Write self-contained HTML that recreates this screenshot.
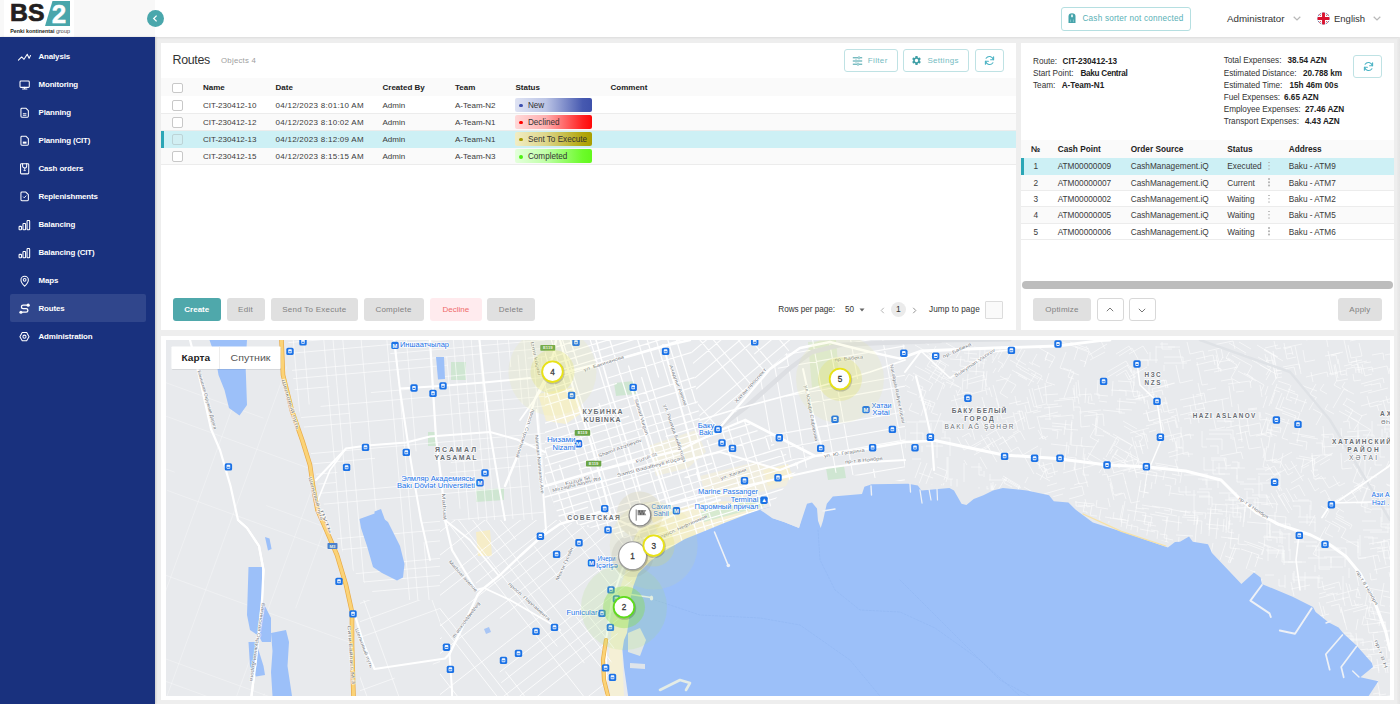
<!DOCTYPE html>
<html lang="en">
<head>
<meta charset="utf-8">
<title>Routes</title>
<style>
*{box-sizing:border-box;margin:0;padding:0}
html,body{width:1400px;height:704px;overflow:hidden;background:#eeeeee;font-family:"Liberation Sans",sans-serif;color:#333}
.abs{position:absolute}
#header{position:absolute;left:0;top:0;width:1400px;height:37px;background:#fff;box-shadow:0 1px 2px rgba(0,0,0,.08)}
#logoarea{position:absolute;left:0;top:0;width:155px;height:37px;background:#f8f8f8}
#logobox{position:absolute;left:4px;top:0;width:70px;height:37px;background:#fff}
#sidebar{position:absolute;left:0;top:37px;width:155px;height:667px;background:#19317e;box-shadow:1px 0 2px rgba(0,0,0,.15)}
.nav{position:absolute;left:0;width:155px;height:28px;color:#fff;font-weight:bold;font-size:7.9px;letter-spacing:-.12px;line-height:30px}
.nav span{position:absolute;left:38.5px;top:0;white-space:nowrap}
.nav svg{position:absolute;left:16.6px;top:8.2px;width:14px;height:13px;overflow:visible}
#navsel{position:absolute;left:9.5px;top:256.7px;width:136.3px;height:28px;background:#30468c;border-radius:2px}
#collapse{position:absolute;left:146.5px;top:10px;width:17px;height:17px;border-radius:50%;background:#4aa7ac}
.panel{position:absolute;background:#fff}
.t8{font-size:8.2px;white-space:nowrap;position:absolute;line-height:10px}
.b{font-weight:bold}
.row{position:absolute;left:0;width:855px;height:17.05px;border-bottom:1px solid #ececec}
.cb{position:absolute;left:11.2px;width:10.8px;height:10.8px;border:1px solid #c8c8c8;border-radius:2px;background:#fff}
.cell{position:absolute;font-size:8px;line-height:17.6px;white-space:nowrap;top:0;color:#3a3a3a}
.badge{position:absolute;left:354.2px;top:1.4px;width:77px;height:14.1px;border-radius:2px;font-size:8.15px;line-height:14.3px;color:#333;white-space:nowrap}
.badge i{position:absolute;left:4.3px;top:5.5px;width:3.8px;height:3.8px;border-radius:50%}
.badge span{position:absolute;left:12.8px;top:.8px}
.btn{position:absolute;height:23px;border-radius:3px;font-size:8px;line-height:23px;text-align:center;white-space:nowrap}
.gbtn{background:#e0e0e0;color:#828282;letter-spacing:.25px}
.obtn{border:1px solid #bfe2e4;background:#fff;color:#74bbc1;text-align:left}
.drow{position:absolute;left:0;width:373px;height:16.3px;border-bottom:1px solid #ececec}
.dcell{position:absolute;font-size:8.25px;line-height:17px;white-space:nowrap;top:0;color:#3a3a3a}
.dots{position:absolute;left:247px;top:3.5px;width:2px;height:9px}
.dots:before{content:"";position:absolute;left:0;top:0;width:1.5px;height:1.5px;border-radius:50%;background:#b5b5b5;box-shadow:0 3.3px 0 #b5b5b5,0 6.6px 0 #b5b5b5}
</style>
</head>
<body>
<!-- HEADER -->
<div id="header">
  <div id="logoarea"><div id="logobox"></div>
    <svg class="abs" style="left:0;top:0" width="80" height="37" viewBox="0 0 80 37">
      <polygon points="52.5,1 70,1 70,26 45,26" fill="#49a6ab"/>
      <text x="10.1" y="20.9" font-family="Liberation Sans" font-weight="bold" font-size="24" fill="#231f20" stroke="#231f20" stroke-width=".7" textLength="34.4" lengthAdjust="spacingAndGlyphs">BS</text>
      <text x="51.8" y="23.2" font-family="Liberation Sans" font-weight="bold" font-size="25.5" fill="#fff" stroke="#fff" stroke-width=".4" textLength="14.5" lengthAdjust="spacingAndGlyphs">2</text>
      <text x="10.3" y="32.8" font-family="Liberation Sans" font-weight="bold" font-size="5.8" fill="#231f20" textLength="44.2" lengthAdjust="spacingAndGlyphs">Penki kontinentai</text>
      <text x="56" y="32.8" font-family="Liberation Sans" font-size="5.8" fill="#444" textLength="14" lengthAdjust="spacingAndGlyphs">group</text>
    </svg>
  </div>
  <!-- cash sorter -->
  <div class="abs" style="left:1061px;top:7px;width:130px;height:23.5px;border:1px solid #b5dfe1;border-radius:3px"></div>
  <svg class="abs" style="left:1067.5px;top:13px" width="8" height="11" viewBox="0 0 8 11"><path d="M.5 3.600a3.500 3.300 0 0 1 7 0V10H.5z" fill="#45a3aa"/><rect x="3" y="1.600" width="2" height="2.600" fill="#cfeaec"/><path d="M2.600 6.500v2.600M5.400 6.500v2.600" stroke="#8fcdd1" stroke-width=".8"/></svg>
  <div class="t8" style="left:1082.5px;top:13.5px;color:#58b0b6;letter-spacing:.2px">Cash sorter not connected</div>
  <div class="abs" style="left:1227px;top:12px;font-size:9.75px;line-height:13px;color:#333;white-space:nowrap">Administrator</div>
  <svg class="abs" style="left:1293px;top:16px" width="8" height="5" viewBox="0 0 8 5"><path d="M.7.8 4 4 7.3.8" fill="none" stroke="#b8b8b8" stroke-width="1.25"/></svg>
  <svg class="abs" style="left:1316.5px;top:12px" width="13" height="13" viewBox="0 0 13 13">
    <defs><clipPath id="fc"><circle cx="6.5" cy="6.5" r="6"/></clipPath></defs>
    <g clip-path="url(#fc)"><rect width="13" height="13" fill="#25347a"/><path d="M0 0 13 13M13 0 0 13" stroke="#fff" stroke-width="2.2"/><path d="M0 0 13 13M13 0 0 13" stroke="#d8232a" stroke-width=".7"/><path d="M6.5 0v13M0 6.5h13" stroke="#fff" stroke-width="4.8"/><path d="M6.5 0v13M0 6.5h13" stroke="#d9112e" stroke-width="2.9"/></g>
  </svg>
  <div class="abs" style="left:1334px;top:12px;font-size:9.5px;line-height:13px;color:#333;white-space:nowrap">English</div>
  <svg class="abs" style="left:1373px;top:16px" width="8" height="5" viewBox="0 0 8 5"><path d="M.7.8 4 4 7.3.8" fill="none" stroke="#b8b8b8" stroke-width="1.25"/></svg>
</div>

<!-- SIDEBAR -->
<div id="sidebar">
  <div id="navsel"></div>
  <div class="nav" style="top:5px"><svg viewBox="0 0 15 14"><path d="M1.5 11 5 7.5 7.5 10 11 4.5 13 9 14.5 6" fill="none" stroke="#fff" stroke-width="1.12" stroke-linejoin="round" stroke-linecap="round"/></svg><span>Analysis</span></div>
  <div class="nav" style="top:33px"><svg viewBox="0 0 15 14"><rect x="3.2" y="3.3" width="10" height="6.8" rx="1" fill="none" stroke="#fff" stroke-width="1.12" stroke-linejoin="round" stroke-linecap="round"/><path d="M6 11.9h4.6M8.2 10.1v1.8" fill="none" stroke="#fff" stroke-width="1.12" stroke-linejoin="round" stroke-linecap="round"/></svg><span>Monitoring</span></div>
  <div class="nav" style="top:61px"><svg viewBox="0 0 15 14"><path d="M4.2 3.4a1 1 0 0 1 1-1h4.3l2.7 2.7v6a1 1 0 0 1-1 1H5.2a1 1 0 0 1-1-1z" fill="none" stroke="#fff" stroke-width="1.12" stroke-linejoin="round" stroke-linecap="round"/><path d="M6.3 8.3h3.8M6.3 10h3.8" fill="none" stroke="#fff" stroke-width="1"/></svg><span>Planning</span></div>
  <div class="nav" style="top:89px"><svg viewBox="0 0 15 14"><path d="M4.2 3.4a1 1 0 0 1 1-1h4.3l2.7 2.7v6a1 1 0 0 1-1 1H5.2a1 1 0 0 1-1-1z" fill="none" stroke="#fff" stroke-width="1.12" stroke-linejoin="round" stroke-linecap="round"/><rect x="6.2" y="8.2" width="4" height="2.2" fill="#fff"/></svg><span>Planning (CIT)</span></div>
  <div class="nav" style="top:117px"><svg viewBox="0 0 15 14"><rect x="3.8" y="1.8" width="8.8" height="11" rx="1" fill="none" stroke="#fff" stroke-width="1.12" stroke-linejoin="round" stroke-linecap="round"/><path d="M6 1.8v2.5a2.2 2.2 0 0 0 4.4 0V1.8" fill="none" stroke="#fff" stroke-width="1.12" stroke-linejoin="round" stroke-linecap="round"/><path d="M8.2 6.2v3.4M6.8 8.4l1.4 1.4 1.4-1.4" fill="none" stroke="#fff" stroke-width=".9"/></svg><span>Cash orders</span></div>
  <div class="nav" style="top:145px"><svg viewBox="0 0 15 14"><path d="M4.2 3.2a1 1 0 0 1 1-1h4.3l2.7 2.7v5.6a1 1 0 0 1-1 1H5.2a1 1 0 0 1-1-1z" fill="none" stroke="#fff" stroke-width="1.12" stroke-linejoin="round" stroke-linecap="round"/><path d="M6.6 7.2l1.2 1.2 2.2-2.4" fill="none" stroke="#fff" stroke-width="1"/></svg><span>Replenishments</span></div>
  <div class="nav" style="top:173px"><svg viewBox="0 0 15 14"><rect x="2.2" y="9" width="2.6" height="3.6" rx=".6" fill="none" stroke="#fff" stroke-width="1.12" stroke-linejoin="round" stroke-linecap="round"/><rect x="6.4" y="6" width="2.8" height="6.6" rx=".6" fill="none" stroke="#fff" stroke-width="1.12" stroke-linejoin="round" stroke-linecap="round"/><rect x="10.8" y="2.8" width="2.8" height="9.8" rx=".6" fill="none" stroke="#fff" stroke-width="1.12" stroke-linejoin="round" stroke-linecap="round"/></svg><span>Balancing</span></div>
  <div class="nav" style="top:201px"><svg viewBox="0 0 15 14"><rect x="2.2" y="9" width="2.6" height="3.6" rx=".6" fill="none" stroke="#fff" stroke-width="1.12" stroke-linejoin="round" stroke-linecap="round"/><rect x="6.4" y="6" width="2.8" height="6.6" rx=".6" fill="none" stroke="#fff" stroke-width="1.12" stroke-linejoin="round" stroke-linecap="round"/><rect x="10.8" y="2.8" width="2.8" height="9.8" rx=".6" fill="none" stroke="#fff" stroke-width="1.12" stroke-linejoin="round" stroke-linecap="round"/></svg><span>Balancing (CIT)</span></div>
  <div class="nav" style="top:229px"><svg viewBox="0 0 15 14"><path d="M8.2 13.2C5.6 10.6 4.2 8.6 4.2 6.4a4 4 0 0 1 8 0c0 2.2-1.400 4.200-4 6.800z" fill="none" stroke="#fff" stroke-width="1.12" stroke-linejoin="round" stroke-linecap="round"/><circle cx="8.200" cy="6.300" r="1.500" fill="none" stroke="#fff" stroke-width="1.12" stroke-linejoin="round" stroke-linecap="round"/></svg><span>Maps</span></div>
  <div class="nav" style="top:257px"><svg viewBox="0 0 15 14"><path d="M10.400 3.400H6.600a1.900 1.900 0 0 0 0 3.800h3.200a1.900 1.900 0 0 1 0 3.800H6" fill="none" stroke="#fff" stroke-width="1.400" stroke-linecap="round"/><circle cx="12" cy="3.400" r="1.700" fill="#fff"/><circle cx="4.200" cy="11" r="1.700" fill="#fff"/></svg><span>Routes</span></div>
  <div class="nav" style="top:285px"><svg viewBox="0 0 15 14"><path d="M5.600 2.800h4.800l2.500 4.400-2.500 4.400H5.600L3.100 7.200z" fill="none" stroke="#fff" stroke-width="1.12" stroke-linejoin="round" stroke-linecap="round"/><circle cx="8" cy="7.200" r="1.700" fill="none" stroke="#fff" stroke-width="1.12" stroke-linejoin="round" stroke-linecap="round"/></svg><span>Administration</span></div>
</div>
<div id="collapse"><svg class="abs" style="left:0;top:0" width="17" height="17" viewBox="0 0 17 17"><path d="M9.6 5.6 6.7 8.5l2.9 2.9" fill="none" stroke="#fff" stroke-width="1.3"/></svg></div>

<div id="rstrip" class="abs" style="left:1396.5px;top:38px;width:3.5px;height:666px;background:linear-gradient(90deg,#ebebeb,#e4e4e4)"></div>
<!-- ROUTES PANEL -->
<div class="panel" id="routes" style="left:161px;top:43px;width:855px;height:287px">
  <div class="abs" style="left:11.5px;top:9px;font-size:12.4px;letter-spacing:-.3px;line-height:16px;color:#333;white-space:nowrap">Routes</div>
  <div class="t8" style="left:60px;top:12.5px;color:#9e9e9e;font-size:7.8px;letter-spacing:.25px">Objects 4</div>
  <!-- header row -->
  <div class="abs" style="left:0;top:35px;width:855px;height:18px;background:#fafafa"></div>
  <div class="cb" style="top:39.5px"></div>
  <div class="cell b" style="left:42px;top:35.5px;color:#222">Name</div>
  <div class="cell b" style="left:114.5px;top:35.5px;color:#222">Date</div>
  <div class="cell b" style="left:221.5px;top:35.5px;color:#222">Created By</div>
  <div class="cell b" style="left:294px;top:35.5px;color:#222">Team</div>
  <div class="cell b" style="left:354.5px;top:35.5px;color:#222">Status</div>
  <div class="cell b" style="left:449.5px;top:35.5px;color:#222">Comment</div>
  <!-- rows -->
  <div class="row" style="top:53.7px"><div class="cb" style="top:3.5px"></div><div class="cell" style="left:42px">CIT-230412-10</div><div class="cell" style="left:114.5px;letter-spacing:.27px">04/12/2023 8:01:10 AM</div><div class="cell" style="left:221.5px">Admin</div><div class="cell" style="left:294px">A-Team-N2</div><div class="badge" style="background:linear-gradient(90deg,#dfe3f3 0%,#bcc5e6 40%,#4659b0 88%,#3e51ab 100%)"><i style="background:#3c4fae"></i><span>New</span></div></div>
  <div class="row" style="top:70.75px;background:#fafafa"><div class="cb" style="top:3.5px"></div><div class="cell" style="left:42px">CIT-230412-12</div><div class="cell" style="left:114.5px;letter-spacing:.27px">04/12/2023 8:10:02 AM</div><div class="cell" style="left:221.5px">Admin</div><div class="cell" style="left:294px">A-Team-N1</div><div class="badge" style="background:linear-gradient(90deg,#ffd9d9 0%,#ffb0b0 40%,#ff2020 88%,#ff0808 100%)"><i style="background:#f00"></i><span>Declined</span></div></div>
  <div class="row" style="top:87.8px;background:#cdf0f5;border-bottom-color:#cdf0f5"><div class="abs" style="left:0;top:0;width:2.5px;height:17.2px;background:#2aa6b6"></div><div class="cb" style="top:3.5px;background:#d2eff3;border-color:#bcd3d6"></div><div class="cell" style="left:42px">CIT-230412-13</div><div class="cell" style="left:114.5px;letter-spacing:.27px">04/12/2023 8:12:09 AM</div><div class="cell" style="left:221.5px">Admin</div><div class="cell" style="left:294px">A-Team-N1</div><div class="badge" style="background:linear-gradient(90deg,#f1edc4 0%,#ddd68a 40%,#b2a60e 88%,#aa9e00 100%)"><i style="background:#a89c00"></i><span>Sent To Execute</span></div></div>
  <div class="row" style="top:104.85px;background:#fafafa"><div class="cb" style="top:3.5px"></div><div class="cell" style="left:42px">CIT-230412-15</div><div class="cell" style="left:114.5px;letter-spacing:.27px">04/12/2023 8:15:15 AM</div><div class="cell" style="left:221.5px">Admin</div><div class="cell" style="left:294px">A-Team-N3</div><div class="badge" style="background:linear-gradient(90deg,#e4ffdc 0%,#c0ffa8 40%,#6cfb2a 88%,#62f81c 100%)"><i style="background:#4cf010"></i><span>Completed</span></div></div>
  <!-- top buttons -->
  <div class="btn obtn" style="left:682.5px;top:6px;width:54.3px"><svg class="abs" style="left:7.7px;top:5.8px" width="11" height="10" viewBox="0 0 11 10"><path d="M.8 1.8h5.200M8 1.800h2.200M.8 5h2.200M5 5h5.200M.8 8.200h4.200M7 8.200h3.200" stroke="#3f9fa6" stroke-width="1" fill="none"/><path d="M7 .3v3M4 3.500v3M6 6.700v3" stroke="#3f9fa6" stroke-width="1" fill="none"/></svg><span class="abs" style="left:23.3px;top:-1.3px;letter-spacing:.35px">Filter</span></div>
  <div class="btn obtn" style="left:742px;top:6px;width:66px"><svg class="abs" style="left:7.4px;top:4.8px" width="11" height="11" viewBox="0 0 24 24"><path fill="#3f9fa6" d="M19.140 12.940c.040-.300.060-.610.060-.940 0-.320-.020-.640-.070-.940l2.030-1.580a.490.490 0 0 0 .120-.610l-1.920-3.320a.488.488 0 0 0-.590-.220l-2.390.960c-.500-.380-1.030-.700-1.620-.940l-.360-2.540a.484.484 0 0 0-.480-.410h-3.840c-.240 0-.430.170-.470.410l-.360 2.540c-.590.240-1.130.570-1.620.940l-2.390-.960c-.220-.080-.470 0-.590.220L2.740 8.870c-.120.210-.080.470.120.610l2.030 1.580c-.050.300-.090.630-.090.940s.020.640.070.940l-2.030 1.580a.490.490 0 0 0-.120.610l1.920 3.320c.120.220.370.290.590.220l2.390-.960c.500.380 1.030.700 1.620.940l.360 2.540c.050.240.240.410.480.410h3.840c.240 0 .440-.170.470-.410l.360-2.540c.590-.240 1.130-.560 1.620-.940l2.390.960c.220.080.470 0 .590-.220l1.920-3.320c.120-.220.070-.470-.120-.610l-2.010-1.580zM12 15.600c-1.980 0-3.600-1.620-3.600-3.600s1.620-3.600 3.600-3.600 3.600 1.620 3.600 3.600-1.620 3.600-3.600 3.600z"/></svg><span class="abs" style="left:23.4px;top:-1.3px;letter-spacing:.3px">Settings</span></div>
  <div class="btn obtn" style="left:813.8px;top:6px;width:29.3px"><svg class="abs" style="left:8.6px;top:5.4px" width="11" height="11" viewBox="0 0 11 11"><path d="M9.300 4.600A4 4 0 0 0 2.100 3.200M1.700 6.400a4 4 0 0 0 7.200 1.400" fill="none" stroke="#4bb3c4" stroke-width="1.100" stroke-linecap="round"/><path d="M9.600 1.700v3h-3M1.400 9.300v-3h3" fill="none" stroke="#4bb3c4" stroke-width="1.100" stroke-linecap="round" stroke-linejoin="round"/></svg></div>
  <!-- bottom buttons -->
  <div class="btn b" style="left:11.5px;top:255px;width:48.5px;background:#4fa8ab;color:#fff">Create</div>
  <div class="btn gbtn" style="left:65.5px;top:255px;width:38px">Edit</div>
  <div class="btn gbtn" style="left:109.8px;top:255px;width:87px">Send To Execute</div>
  <div class="btn gbtn" style="left:202.5px;top:255px;width:60px">Complete</div>
  <div class="btn" style="left:269px;top:255px;width:51.5px;background:#ffebee;color:#ef6b6b">Decline</div>
  <div class="btn gbtn" style="left:326px;top:255px;width:48px">Delete</div>
  <!-- pagination -->
  <div class="t8" style="left:617.3px;top:262px;color:#333;letter-spacing:-.05px">Rows per page:</div>
  <div class="t8" style="left:684px;top:262px;color:#333">50</div>
  <svg class="abs" style="left:698px;top:265px" width="6" height="4" viewBox="0 0 6 4"><path d="M.5.5h5L3 3.5z" fill="#666"/></svg>
  <svg class="abs" style="left:719px;top:263.5px" width="5" height="7" viewBox="0 0 5 7"><path d="M3.8.8 1.2 3.5l2.6 2.7" fill="none" stroke="#aaa" stroke-width=".9"/></svg>
  <div class="abs" style="left:729.8px;top:259px;width:15px;height:15px;border-radius:50%;background:#ebebeb;font-size:8.5px;line-height:15.5px;text-align:center;color:#333">1</div>
  <svg class="abs" style="left:751px;top:263.5px" width="5" height="7" viewBox="0 0 5 7"><path d="M1.2.8 3.8 3.5 1.2 6.2" fill="none" stroke="#888" stroke-width=".9"/></svg>
  <div class="t8" style="left:768px;top:262px;color:#333;letter-spacing:.1px">Jump to page</div>
  <div class="abs" style="left:824px;top:258px;width:18px;height:17.5px;border:1px solid #dcdcdc;background:#fafafa;border-radius:1px"></div>
</div>

<!-- DETAIL PANEL -->
<div class="panel" id="detail" style="left:1021px;top:43px;width:373px;height:287px">
  <!-- info left -->
  <div class="t8" style="left:12px;top:13.5px">Route:</div><div class="t8 b" style="left:41.5px;top:13.5px;color:#222">CIT-230412-13</div>
  <div class="t8" style="left:12px;top:25.8px">Start Point:</div><div class="t8 b" style="left:59.5px;top:25.8px;color:#222;letter-spacing:-.3px">Baku Central</div>
  <div class="t8" style="left:12px;top:37.5px">Team:</div><div class="t8 b" style="left:40.7px;top:37.5px;color:#222">A-Team-N1</div>
  <!-- info right -->
  <div class="t8" style="left:202.7px;top:13px">Total Expenses:</div><div class="t8 b" style="left:266.5px;top:13px;color:#222">38.54 AZN</div>
  <div class="t8" style="left:202.7px;top:25.8px">Estimated Distance:</div><div class="t8 b" style="left:282px;top:25.8px;color:#222">20.788 km</div>
  <div class="t8" style="left:202.7px;top:37.5px">Estimated Time:</div><div class="t8 b" style="left:268.5px;top:37.5px;color:#222">15h 46m 00s</div>
  <div class="t8" style="left:202.7px;top:49.6px">Fuel Expenses:</div><div class="t8 b" style="left:263px;top:49.6px;color:#222">6.65 AZN</div>
  <div class="t8" style="left:202.7px;top:61.7px">Employee Expenses:</div><div class="t8 b" style="left:284px;top:61.7px;color:#222">27.46 AZN</div>
  <div class="t8" style="left:202.7px;top:74px">Transport Expenses:</div><div class="t8 b" style="left:284px;top:74px;color:#222">4.43 AZN</div>
  <div class="btn obtn" style="left:332px;top:11.8px;width:29.3px"><svg class="abs" style="left:8.6px;top:5.4px" width="11" height="11" viewBox="0 0 11 11"><path d="M9.300 4.600A4 4 0 0 0 2.100 3.200M1.700 6.400a4 4 0 0 0 7.200 1.400" fill="none" stroke="#4bb3c4" stroke-width="1.100" stroke-linecap="round"/><path d="M9.600 1.700v3h-3M1.400 9.300v-3h3" fill="none" stroke="#4bb3c4" stroke-width="1.100" stroke-linecap="round" stroke-linejoin="round"/></svg></div>
  <!-- table -->
  <div class="abs" style="left:0;top:97px;width:373px;height:18.4px;background:#fafafa"></div>
  <div class="dcell b" style="left:9.7px;top:98px;color:#222">&#8470;</div>
  <div class="dcell b" style="left:36.7px;top:98px;color:#222">Cash Point</div>
  <div class="dcell b" style="left:109.7px;top:98px;color:#222">Order Source</div>
  <div class="dcell b" style="left:206.3px;top:98px;color:#222">Status</div>
  <div class="dcell b" style="left:267.7px;top:98px;color:#222">Address</div>
  <div class="drow" style="top:115.4px;background:#cdf0f5;border-bottom-color:#cdf0f5"><div class="abs" style="left:0;top:0;width:2.5px;height:16.2px;background:#2aa6b6"></div><div class="dcell" style="left:12.5px">1</div><div class="dcell" style="left:36.7px">ATM00000009</div><div class="dcell" style="left:109.7px">CashManagement.iQ</div><div class="dcell" style="left:206.3px">Executed</div><div class="dots"></div><div class="dcell" style="left:267.7px">Baku - ATM9</div></div>
  <div class="drow" style="top:131.8px;background:#fafafa"><div class="dcell" style="left:12.5px">2</div><div class="dcell" style="left:36.7px">ATM00000007</div><div class="dcell" style="left:109.7px">CashManagement.iQ</div><div class="dcell" style="left:206.3px">Current</div><div class="dots"></div><div class="dcell" style="left:267.7px">Baku - ATM7</div></div>
  <div class="drow" style="top:148.1px"><div class="dcell" style="left:12.5px">3</div><div class="dcell" style="left:36.7px">ATM00000002</div><div class="dcell" style="left:109.7px">CashManagement.iQ</div><div class="dcell" style="left:206.3px">Waiting</div><div class="dots"></div><div class="dcell" style="left:267.7px">Baku - ATM2</div></div>
  <div class="drow" style="top:164.4px;background:#fafafa"><div class="dcell" style="left:12.5px">4</div><div class="dcell" style="left:36.7px">ATM00000005</div><div class="dcell" style="left:109.7px">CashManagement.iQ</div><div class="dcell" style="left:206.3px">Waiting</div><div class="dots"></div><div class="dcell" style="left:267.7px">Baku - ATM5</div></div>
  <div class="drow" style="top:180.7px"><div class="dcell" style="left:12.5px">5</div><div class="dcell" style="left:36.7px">ATM00000006</div><div class="dcell" style="left:109.7px">CashManagement.iQ</div><div class="dcell" style="left:206.3px">Waiting</div><div class="dots"></div><div class="dcell" style="left:267.7px">Baku - ATM6</div></div>
  <!-- scrollbar -->
  <div class="abs" style="left:1px;top:238px;width:371px;height:8px;border-radius:4px;background:#bdbdbd"></div>
  <!-- buttons -->
  <div class="btn gbtn" style="left:12px;top:255px;width:58px">Optimize</div>
  <div class="btn" style="left:75.6px;top:255px;width:27px;border:1px solid #d8d8d8;background:#fff"><svg class="abs" style="left:8.5px;top:8px" width="8" height="5" viewBox="0 0 8 5"><path d="M.8 4.2 4 1l3.2 3.2" fill="none" stroke="#777" stroke-width="1"/></svg></div>
  <div class="btn" style="left:107.8px;top:255px;width:27px;border:1px solid #d8d8d8;background:#fff"><svg class="abs" style="left:8.5px;top:8.5px" width="8" height="5" viewBox="0 0 8 5"><path d="M.8.8 4 4 7.2.8" fill="none" stroke="#777" stroke-width="1"/></svg></div>
  <div class="btn gbtn" style="left:317px;top:255px;width:44px">Apply</div>
</div>

<!-- MAP PANEL -->
<div class="panel" id="mappanel" style="left:161px;top:336px;width:1233px;height:364px">
<!--MAPSTART-->
<svg class="abs" style="left:5px;top:4px" width="1224" height="356" viewBox="166 340 1224 356" font-family="Liberation Sans">
<rect x="166" y="340" width="1224" height="356" fill="#e8eaed"/>
<polygon points="538,394 574,387 583,412 566,424 546,421" fill="#f5f0d4" />
<polygon points="648,446 696,430 706,452 688,468 656,476" fill="#f0eee0" />
<polygon points="700,476 756,462 792,472 786,486 740,497 706,497" fill="#f1eee0" />
<polygon points="650,516 700,503 745,500 760,509 722,524 685,539 650,561 638,574 630,600 627,633 622,650 624,696 610,696 609,650 616,600 626,570 644,548 660,536" fill="#f5f0d6" />
<polygon points="763,470 788,464 793,478 768,486" fill="#f5efd3" />
<polygon points="476,532 490,530 492,556 478,556" fill="#f6edc8" />
<polygon points="451,362 466,362 466,380 451,380" fill="#cfe6d2" />
<polygon points="614,383 634,381 636,394 616,396" fill="#cfe6d2" />
<polygon points="428,432 436,432 436,446 428,446" fill="#cfe6d2" />
<polygon points="476,490 504,488 504,500 476,502" fill="#cfe6d2" />
<polygon points="808,342 836,340 840,386 812,388" fill="#dde9d5" />
<polygon points="826,468 844,466 846,478 828,480" fill="#cfe6d2" />
<polygon points="700,512 760,498 764,506 704,522" fill="#d7ead0" />
<clipPath id="c1"><polygon points="545,340 690,340 700,420 716,432 745,420 800,466 770,507 650,561 620,535 560,520 545,480"/></clipPath>
<g clip-path="url(#c1)" stroke="#fff" stroke-width="1.25" fill="none" opacity="0.95">
<path d="M449.3 331.8L526.2 308.3M526.2 308.3L595.0 287.3M595.0 287.3L674.2 263.1M674.2 263.1L747.0 240.8M453.8 346.6L486.1 336.7M486.1 336.7L597.9 302.6M679.5 277.6L709.5 268.4M709.5 268.4L743.3 258.1M792.8 243.0L861.5 222.0M456.4 355.0L540.2 329.4M540.2 329.4L625.9 303.2M625.9 303.2L678.5 287.1M678.5 287.1L792.9 252.1M792.9 252.1L882.5 224.7M458.3 361.2L493.0 350.6M493.0 350.6L556.2 331.3M556.2 331.3L618.1 312.3M719.8 281.3L766.5 267.0M766.5 267.0L835.6 245.8M514.6 359.8L571.9 342.2M715.8 298.3L749.6 287.9M749.6 287.9L793.6 274.5M793.6 274.5L860.8 253.9M549.3 357.9L614.2 338.1M614.2 338.1L666.1 322.2M666.1 322.2L763.9 292.3M763.9 292.3L868.8 260.3M551.2 364.8L665.0 330.0M665.0 330.0L715.9 314.4M715.9 314.4L772.9 297.0M807.9 286.3L886.8 262.2M469.6 398.0L537.2 377.3M537.2 377.3L607.6 355.8M607.6 355.8L710.8 324.2M710.8 324.2L752.8 311.4M752.8 311.4L851.9 281.1M471.4 404.0L581.0 370.5M581.0 370.5L691.5 336.7M691.5 336.7L772.1 312.1M809.8 300.6L921.3 266.5M473.8 411.9L573.4 381.5M718.0 337.3L766.4 322.5M766.4 322.5L868.4 291.3M522.0 404.2L573.9 388.3M607.8 378.0L668.2 359.5M668.2 359.5L708.2 347.3M708.2 347.3L813.6 315.0M813.6 315.0L898.8 289.0M509.8 416.1L616.8 383.4M728.3 349.3L811.8 323.8M811.8 323.8L903.4 295.8M483.0 442.1L589.2 409.6M589.2 409.6L678.5 382.3M678.5 382.3L785.9 349.5M785.9 349.5L873.6 322.7M485.6 450.6L582.4 421.0M582.4 421.0L660.4 397.2M660.4 397.2L722.0 378.3M803.0 353.6L886.8 328.0M488.3 459.1L550.4 440.1M550.4 440.1L629.1 416.1M823.2 356.7L903.6 332.1M490.1 465.3L561.6 443.5M561.6 443.5L669.5 410.5M669.5 410.5L699.2 401.4M699.2 401.4L786.3 374.8M786.3 374.8L829.6 361.6M829.6 361.6L915.0 335.4M492.8 473.9L578.8 447.6M578.8 447.6L644.5 427.5M644.5 427.5L751.9 394.7M751.9 394.7L813.7 375.8M495.0 481.1L596.7 450.0M596.7 450.0L707.2 416.2M707.2 416.2L750.4 403.0M750.4 403.0L802.8 387.0M802.8 387.0L867.1 367.3M497.1 488.2L598.1 457.4M665.7 436.7L697.1 427.1M697.1 427.1L729.3 417.2M729.3 417.2L807.1 393.4M498.9 494.1L529.8 484.7M578.9 469.6L611.6 459.6M611.6 459.6L678.7 439.1M678.7 439.1L763.8 413.1M763.8 413.1L875.0 379.1M544.9 486.7L614.2 465.5M614.2 465.5L658.3 452.0M658.3 452.0L716.8 434.2M716.8 434.2L790.2 411.7M790.2 411.7L884.0 383.0M503.3 508.4L539.5 497.3M630.4 469.6L698.1 448.9M698.1 448.9L805.1 416.1M805.1 416.1L882.8 392.4M505.8 516.6L574.4 495.7M574.4 495.7L620.8 481.5M620.8 481.5L719.9 451.2M719.9 451.2L810.3 423.5M810.3 423.5L916.5 391.1M508.6 525.5L605.3 495.9M605.3 495.9L712.3 463.2M771.0 445.3L837.6 424.9M837.6 424.9L932.4 395.9M510.2 531.0L544.4 520.5M544.4 520.5L588.0 507.2M684.5 477.7L726.0 465.0M726.0 465.0L817.0 437.2M817.0 437.2L905.0 410.3M512.4 538.2L548.5 527.1M548.5 527.1L622.5 504.5M622.5 504.5L713.9 476.5M713.9 476.5L787.6 454.0M787.6 454.0L864.5 430.5M514.5 544.9L620.7 512.4M620.7 512.4L722.6 481.3M722.6 481.3L796.4 458.7M796.4 458.7L842.4 444.6M842.4 444.6L914.4 422.6M516.1 550.4L589.3 528.0M589.3 528.0L686.9 498.2M686.9 498.2L757.8 476.5M757.8 476.5L792.2 466.0M792.2 466.0L856.5 446.3M856.5 446.3L964.7 413.3M518.3 557.5L584.3 537.3M584.3 537.3L690.5 504.8M690.5 504.8L746.5 487.7M746.5 487.7L828.4 462.7M828.4 462.7L868.2 450.5M520.0 562.9L568.2 548.2M568.2 548.2L624.6 530.9M798.3 477.8L870.9 455.6M521.8 569.0L588.1 548.7M588.1 548.7L652.4 529.1M652.4 529.1L694.8 516.1M694.8 516.1L777.9 490.7M777.9 490.7L852.1 468.0M852.1 468.0L933.5 443.2M523.7 575.2L622.2 545.1M622.2 545.1L678.1 528.0M678.1 528.0L786.2 495.0M786.2 495.0L900.8 459.9M525.5 581.1L616.8 553.2M616.8 553.2L653.8 541.9M653.8 541.9L718.8 522.0M718.8 522.0L758.3 509.9M846.0 483.1L892.0 469.0M528.2 589.7L566.8 577.9M566.8 577.9L660.7 549.2M660.7 549.2L748.4 522.4M783.2 511.8L815.1 502.0M815.1 502.0L888.1 479.7M530.0 595.6L576.2 581.5M576.2 581.5L690.1 546.7M727.0 535.4L837.6 501.6M837.6 501.6L932.1 472.7M532.1 602.7L597.8 582.6M597.8 582.6L627.7 573.5M627.7 573.5L729.0 542.5M729.0 542.5L796.8 521.8M796.8 521.8L860.4 502.3M860.4 502.3L903.3 489.2M533.8 608.1L631.5 578.2M631.5 578.2L734.3 546.8M734.3 546.8L797.8 527.4M797.8 527.4L869.9 505.4M869.9 505.4L967.8 475.4M536.4 616.8L632.1 587.5M632.1 587.5L695.7 568.1M695.7 568.1L800.1 536.2M800.1 536.2L894.8 507.2M538.5 623.6L573.3 613.0M642.3 591.9L701.6 573.7M701.6 573.7L784.0 548.5M784.0 548.5L894.0 514.9M540.5 630.2L618.3 606.4M618.3 606.4L680.5 587.4M680.5 587.4L764.4 561.7M764.4 561.7L858.7 532.9M858.7 532.9L889.4 523.5M606.3 618.9L651.8 605.0M651.8 605.0L688.9 593.6M688.9 593.6L795.6 561.0M795.6 561.0L868.0 538.9M868.0 538.9L945.5 515.2M545.3 645.9L580.6 635.1M852.7 551.9L924.0 530.1M547.1 651.5L612.0 631.6M612.0 631.6L692.1 607.1M692.1 607.1L745.4 590.8M745.4 590.8L822.3 567.3M822.3 567.3L912.7 539.7M581.1 647.0L674.7 618.4M674.7 618.4L780.7 586.0M780.7 586.0L813.7 575.9M551.4 665.5L621.2 644.2M621.2 644.2L670.8 629.0M670.8 629.0L780.2 595.6M780.2 595.6L849.2 574.5M849.2 574.5L948.2 544.2M553.1 671.3L621.0 650.6M621.0 650.6L654.2 640.4M654.2 640.4L693.6 628.4M693.6 628.4L779.8 602.0M779.8 602.0L831.0 586.4M831.0 586.4L895.8 566.5M449.3 331.8L483.2 442.5M498.2 491.7L530.5 597.3M530.5 597.3L555.7 679.7M457.0 329.5L480.6 406.8M480.6 406.8L506.0 490.0M506.0 490.0L519.8 535.0M519.8 535.0L554.3 648.0M463.7 327.5L483.6 392.7M483.6 392.7L495.1 430.3M505.8 465.2L532.3 552.1M532.3 552.1L557.7 635.1M557.7 635.1L579.1 705.0M502.4 425.9L514.4 464.9M514.4 464.9L539.6 547.3M539.6 547.3L553.9 594.3M553.9 594.3L569.5 645.2M569.5 645.2L588.0 705.6M482.3 321.8L505.5 397.7M505.5 397.7L538.5 505.6M489.1 319.7L510.7 390.1M510.7 390.1L527.3 444.5M527.3 444.5L538.1 479.7M564.3 565.4L581.0 620.3M581.0 620.3L608.1 708.7M496.2 317.5L524.1 408.7M524.1 408.7L535.9 447.5M535.9 447.5L559.7 525.2M559.7 525.2L593.2 634.7M593.2 634.7L613.5 701.1M504.0 315.1L523.3 378.2M523.3 378.2L555.6 483.9M555.6 483.9L573.9 543.7M573.9 543.7L592.2 603.7M592.2 603.7L611.2 665.7M512.9 312.4L535.8 387.6M559.4 464.8L588.2 558.8M604.3 611.7L626.7 684.8M521.7 309.7L547.7 394.4M547.7 394.4L558.1 428.6M587.6 525.2L598.5 560.9M530.9 306.9L559.3 399.8M559.3 399.8L574.6 449.6M574.6 449.6L603.5 544.1M603.5 544.1L632.4 638.7M632.4 638.7L650.0 696.4M540.3 304.0L563.2 379.0M563.2 379.0L590.6 468.6M590.6 468.6L610.2 532.6M610.2 532.6L636.5 618.7M636.5 618.7L666.5 716.8M550.6 300.9L576.2 384.7M576.2 384.7L603.6 474.5M603.6 474.5L623.5 539.5M623.5 539.5L636.1 580.7M636.1 580.7L671.0 694.7M557.7 298.7L577.7 364.0M628.9 531.4L654.7 615.8M598.9 403.1L610.5 441.1M610.5 441.1L625.0 488.5M625.0 488.5L652.6 578.9M652.6 578.9L667.3 626.9M575.9 293.2L599.1 369.0M599.1 369.0L620.5 439.0M620.5 439.0L652.6 544.1M652.6 544.1L670.4 602.2M670.4 602.2L704.3 713.2M593.8 287.7L612.7 349.5M612.7 349.5L635.1 422.6M635.1 422.6L669.9 536.5M684.9 585.6L706.1 655.0M628.4 365.5L641.3 407.7M641.3 407.7L656.9 458.7M656.9 458.7L679.3 531.8M679.3 531.8L714.2 646.0M641.5 377.0L671.9 476.3M702.3 575.8L718.2 627.7M619.3 279.9L640.4 348.9M640.4 348.9L664.6 428.1M664.6 428.1L681.4 482.9M681.4 482.9L701.1 547.5M701.1 547.5L712.3 584.0M712.3 584.0L726.6 630.6M628.1 277.2L658.7 377.5M675.7 432.9L692.5 487.9M692.5 487.9L720.1 578.2M636.2 274.7L670.4 386.6M696.4 471.6L715.1 532.7M715.1 532.7L730.1 581.9M646.9 271.4L661.1 317.9M661.1 317.9L677.5 371.6M677.5 371.6L700.5 446.7M700.5 446.7L718.2 504.5M718.2 504.5L744.5 590.5M744.5 590.5L758.5 636.4M654.8 269.0L678.4 346.2M678.4 346.2L695.9 403.4M707.1 440.0L718.3 476.8M745.7 566.5L765.1 629.8M671.2 264.0L683.3 303.4M683.3 303.4L694.0 338.3M694.0 338.3L714.0 403.8M714.0 403.8L739.8 488.2M739.8 488.2L770.1 587.5M770.1 587.5L787.6 644.7M677.8 262.0L704.9 350.9M704.9 350.9L734.5 447.6M759.3 528.7L776.8 585.8M685.8 259.5L715.4 356.1M740.2 437.4L769.2 532.1M769.2 532.1L792.4 607.9M694.4 256.9L722.0 347.0M722.0 347.0L744.3 420.1M744.3 420.1L775.1 520.7M775.1 520.7L808.7 630.7M709.3 252.4L736.4 341.1M736.4 341.1L769.6 449.7M719.6 249.2L743.1 326.2M743.1 326.2L758.9 377.6M758.9 377.6L793.7 491.7M818.3 572.1L848.8 671.8M729.9 246.1L753.8 324.1M753.8 324.1L767.4 368.8M778.2 404.0L791.7 448.2M791.7 448.2L825.2 557.8M825.2 557.8L842.1 612.9M739.5 243.1L763.9 322.7M763.9 322.7L773.1 352.8M794.2 421.8L813.1 483.8M813.1 483.8L826.5 527.4M826.5 527.4L842.2 578.8M842.2 578.8L859.7 636.0M746.2 241.1L758.7 282.2M758.7 282.2L783.3 362.6M783.3 362.6L802.9 426.7M802.9 426.7L829.8 514.7M829.8 514.7L858.4 608.1M756.9 237.8L788.2 340.1M788.2 340.1L808.4 406.1M808.4 406.1L841.0 512.7M841.0 512.7L863.5 586.6M767.2 234.6L777.5 268.0M777.5 268.0L809.9 374.2M809.9 374.2L834.4 454.3M834.4 454.3L851.2 509.2M861.8 543.9L882.3 611.1M784.9 229.3L799.9 278.5M799.9 278.5L819.1 341.3M819.1 341.3L829.7 375.8M829.7 375.8L863.9 487.7M863.9 487.7L895.4 591.0"/>
</g>
<clipPath id="c1b"><polygon points="690,340 800,340 770,369 716,432 700,420"/></clipPath>
<g clip-path="url(#c1b)" stroke="#fff" stroke-width="1.1" fill="none" opacity="0.9">
<path d="M629.9 375.9L704.4 313.5M643.8 392.5L666.8 373.2M666.8 373.2L710.4 336.6M710.4 336.6L737.7 313.7M737.7 313.7L816.9 247.2M675.9 377.7L760.9 306.4M760.9 306.4L818.2 258.3M657.7 409.1L695.0 377.9M695.0 377.9L781.6 305.2M781.6 305.2L818.0 274.6M663.7 416.2L698.5 387.0M698.5 387.0L790.1 310.1M754.2 354.2L784.5 328.8M784.5 328.8L829.1 291.4M678.2 433.5L710.5 406.4M710.5 406.4L798.1 332.8M798.1 332.8L826.5 309.0M684.0 440.4L720.5 409.7M720.5 409.7L759.7 376.8M759.7 376.8L837.2 311.8M690.9 448.7L754.6 395.3M754.6 395.3L798.3 358.6M798.3 358.6L867.3 300.7M705.8 466.4L765.2 416.5M765.2 416.5L791.3 394.6M791.3 394.6L833.9 358.9M718.9 482.0L758.9 448.5M758.9 448.5L819.6 397.5M819.6 397.5L904.5 326.3M723.9 487.9L798.6 425.2M798.6 425.2L885.6 352.2M729.3 494.3L796.7 437.7M796.7 437.7L865.1 380.4M629.9 375.9L698.1 457.2M698.1 457.2L747.5 516.1M636.9 370.0L665.8 404.4M665.8 404.4L698.7 443.6M698.7 443.6L762.7 519.9M646.6 361.9L694.2 418.6M694.2 418.6L747.0 481.6M747.0 481.6L768.4 507.0M655.9 354.1L725.7 437.2M753.8 470.7L801.8 527.9M729.6 425.3L801.4 510.8M743.1 423.8L780.5 468.5M688.7 326.6L747.9 397.2M696.7 319.9L728.5 357.8M728.5 357.8L750.2 383.7M750.2 383.7L813.5 459.1M766.0 388.4L799.2 428.0M799.2 428.0L826.7 460.7M734.9 336.0L811.8 427.6M811.8 427.6L873.6 501.2M718.6 301.5L751.9 341.1M751.9 341.1L825.1 428.4M781.0 360.1L823.6 410.9M823.6 410.9L846.2 437.9M735.6 287.3L789.0 351.0M789.0 351.0L835.1 405.8M835.1 405.8L903.1 486.9M745.2 279.2L784.6 326.1M835.6 387.0L866.7 424.0M753.5 272.2L798.6 326.0M798.6 326.0L857.2 395.8M857.2 395.8L888.3 432.9"/>
</g>
<clipPath id="c1c"><polygon points="800,340 905,340 905,482 815,470 800,466 745,420 716,432 770,369"/></clipPath>
<g clip-path="url(#c1c)" stroke="#fff" stroke-width="1.1" fill="none" opacity="0.85">
<path d="M662.0 307.0L723.7 296.1M723.7 296.1L754.9 290.6M754.9 290.6L807.7 281.3M807.7 281.3L919.1 261.7M664.1 319.2L707.3 311.6M707.3 311.6L768.7 300.8M768.7 300.8L862.4 284.2M862.4 284.2L893.7 278.7M667.0 335.6L764.9 318.4M764.9 318.4L799.3 312.3M850.0 303.4L892.9 295.8M892.9 295.8L925.2 290.1M669.4 348.9L711.0 341.6M711.0 341.6L763.6 332.3M852.2 316.7L899.9 308.2M899.9 308.2L992.6 291.9M671.7 361.9L721.2 353.2M721.2 353.2L781.4 342.6M814.5 336.7L899.9 321.6M899.9 321.6L1001.2 303.8M673.8 374.3L784.9 354.7M784.9 354.7L875.5 338.7M875.5 338.7L989.7 318.6M676.0 386.2L713.5 379.6M777.8 368.3L841.3 357.1M841.3 357.1L914.9 344.1M914.9 344.1L958.5 336.4M681.0 414.8L718.8 408.1M785.8 396.3L866.9 382.0M866.9 382.0L945.5 368.1M810.1 402.9L883.5 389.9M883.5 389.9L954.6 377.4M687.2 450.1L766.9 436.1M766.9 436.1L855.7 420.4M855.7 420.4L926.8 407.9M926.8 407.9L1041.0 387.7M689.7 464.4L787.7 447.2M787.7 447.2L872.2 432.2M872.2 432.2L938.6 420.5M938.6 420.5L1041.7 402.4M725.0 471.6L799.4 458.5M799.4 458.5L860.9 447.6M860.9 447.6L903.8 440.1M903.8 440.1L953.6 431.3M696.6 503.4L747.4 494.5M747.4 494.5L834.5 479.1M834.5 479.1L919.4 464.2M919.4 464.2L1022.6 446.0M698.9 516.1L807.0 497.0M807.0 497.0L900.0 480.6M900.0 480.6L990.3 464.7M704.3 546.7L783.8 532.7M783.8 532.7L838.6 523.0M838.6 523.0L915.5 509.5M915.5 509.5L967.2 500.4M874.6 528.6L944.2 516.3M662.0 307.0L668.0 341.3M668.0 341.3L681.2 415.8M681.2 415.8L692.5 480.1M692.5 480.1L701.7 532.0M701.7 532.0L712.0 590.5M680.9 303.7L699.1 406.7M699.1 406.7L710.8 473.5M710.8 473.5L725.8 558.2M715.9 297.5L724.7 347.5M724.7 347.5L730.1 378.3M730.1 378.3L750.0 491.2M750.0 491.2L757.3 532.6M757.3 532.6L769.1 599.3M768.8 504.7L774.6 538.0M774.6 538.0L791.3 632.3M745.3 292.3L750.9 324.2M750.9 324.2L763.7 396.6M763.7 396.6L773.7 453.5M773.7 453.5L792.1 557.4M761.1 289.5L778.3 386.9M778.3 386.9L789.6 451.0M789.6 451.0L803.4 528.9M774.6 287.2L783.7 339.0M783.7 339.0L790.8 379.2M790.8 379.2L796.3 410.4M796.3 410.4L803.8 452.7M803.8 452.7L813.3 506.5M813.3 506.5L826.0 578.8M812.5 339.2L820.5 384.9M820.5 384.9L841.3 502.9M841.3 502.9L860.1 609.3M829.8 344.1L843.7 422.4M843.7 422.4L858.6 507.2M858.6 507.2L878.5 619.9M839.3 275.7L857.6 379.2M873.4 468.8L879.8 505.0M879.8 505.0L896.7 601.3M870.5 270.2L875.9 300.8M875.9 300.8L893.8 402.1M893.8 402.1L910.5 496.8M910.5 496.8L928.2 597.6M889.5 266.9L896.3 305.4M896.3 305.4L907.8 370.6M907.8 370.6L916.9 422.3M916.9 422.3L922.5 453.9M922.5 453.9L931.2 503.6M931.2 503.6L942.2 565.9M908.8 263.5L924.0 349.6M924.0 349.6L933.6 403.9M943.8 461.9L954.3 521.1"/>
</g>
<clipPath id="c2"><polygon points="440,520 560,520 620,535 640,560 625,600 604,696 440,696"/></clipPath>
<g clip-path="url(#c2)" stroke="#fff" stroke-width="1" fill="none" opacity="0.8">
<path d="M339.0 583.3L401.4 534.6M437.6 506.3L471.4 479.9M525.5 437.6L584.8 391.2M344.6 590.5L435.8 519.3M435.8 519.3L521.9 452.0M352.2 600.3L444.2 528.5M444.2 528.5L496.8 487.4M496.8 487.4L533.0 459.1M533.0 459.1L604.7 403.1M363.6 614.8L397.7 588.1M397.7 588.1L448.2 548.7M448.2 548.7L486.9 518.5M486.9 518.5L573.5 450.8M573.5 450.8L641.7 397.5M377.1 632.2L432.9 588.6M432.9 588.6L486.3 546.9M486.3 546.9L526.3 515.6M526.3 515.6L590.5 465.4M590.5 465.4L616.4 445.2M383.1 639.8L448.9 588.4M448.9 588.4L483.4 561.5M483.4 561.5L577.4 488.0M577.4 488.0L623.2 452.2M476.0 583.1L569.8 509.8M569.8 509.8L610.1 478.3M610.1 478.3L679.7 423.9M398.0 658.8L457.9 612.0M457.9 612.0L486.1 589.9M486.1 589.9L560.2 532.0M560.2 532.0L641.1 468.8M404.2 666.8L441.8 637.5M511.1 583.4L574.1 534.1M574.1 534.1L632.5 488.5M411.3 675.9L489.6 614.7M489.6 614.7L577.5 546.1M577.5 546.1L611.9 519.2M499.8 618.5L536.3 590.0M536.3 590.0L620.2 524.4M431.2 701.4L506.5 642.6M506.5 642.6L577.5 587.1M577.5 587.1L602.2 567.7M602.2 567.7L648.2 531.8M648.2 531.8L691.6 497.9M499.7 672.1L531.6 647.2M531.6 647.2L598.5 594.9M598.5 594.9L636.0 565.6M636.0 565.6L708.7 508.8M501.3 682.7L569.7 629.2M569.7 629.2L651.5 565.3M651.5 565.3L707.5 521.5M456.2 733.4L529.8 675.9M529.8 675.9L594.5 625.3M594.5 625.3L680.0 558.5M680.0 558.5L764.3 492.7M462.2 741.1L513.4 701.1M513.4 701.1L579.6 649.3M579.6 649.3L607.8 627.3M607.8 627.3L651.4 593.3M651.4 593.3L742.8 521.9M469.0 749.7L510.0 717.7M510.0 717.7L543.0 691.9M543.0 691.9L584.5 659.5M584.5 659.5L632.4 622.1M632.4 622.1L716.3 556.5M488.4 774.6L563.3 716.0M563.3 716.0L611.4 678.5M702.3 607.4L770.9 553.9M494.1 781.9L540.2 745.9M540.2 745.9L606.8 693.9M606.8 693.9L699.7 621.3M699.7 621.3L751.3 581.0M595.1 716.6L651.6 672.5M651.6 672.5L721.7 617.7M721.7 617.7L815.6 544.4M541.9 782.1L611.6 727.7M611.6 727.7L687.8 668.1M687.8 668.1L769.0 604.7M425.9 655.8L463.8 704.4M511.8 765.9L574.0 845.5M382.3 549.5L417.0 594.0M417.0 594.0L449.2 635.1M449.2 635.1L470.7 662.6M470.7 662.6L514.2 718.3M514.2 718.3L558.1 774.5M558.1 774.5L582.3 805.5M389.5 543.9L437.0 604.8M437.0 604.8L489.4 671.8M489.4 671.8L561.3 763.8M505.4 671.5L529.9 703.0M529.9 703.0L601.9 795.1M436.1 507.4L481.7 565.8M481.7 565.8L549.3 652.3M549.3 652.3L599.2 716.2M599.2 716.2L667.8 803.9M443.9 501.3L476.7 543.3M476.7 543.3L518.9 597.4M518.9 597.4L557.3 646.5M452.7 494.5L493.3 546.5M493.3 546.5L517.3 577.1M517.3 577.1L553.2 623.1M553.2 623.1L584.4 663.1M461.0 488.0L479.8 512.2M479.8 512.2L551.5 603.9M551.5 603.9L603.1 670.0M603.1 670.0L638.3 715.0M470.0 480.9L516.1 539.9M576.3 617.0L599.9 647.2M599.9 647.2L633.3 690.0M633.3 690.0L675.4 743.8M534.4 546.4L607.4 639.8M607.4 639.8L644.1 686.7M644.1 686.7L707.9 768.5M506.6 452.4L576.4 541.8M576.4 541.8L596.1 567.0M596.1 567.0L656.3 644.1M656.3 644.1L675.1 668.1M675.1 668.1L716.7 721.4M517.3 444.0L539.9 472.9M539.9 472.9L582.8 527.8M582.8 527.8L622.2 578.3M664.9 632.9L701.1 679.2M583.1 493.3L608.1 525.3M608.1 525.3L679.4 616.6M679.4 616.6L749.0 705.6M607.5 507.4L674.4 593.0M674.4 593.0L694.6 618.9M694.6 618.9L734.0 669.3M553.1 416.1L609.8 488.6"/>
</g>
<clipPath id="c3"><polygon points="288,340 545,340 545,520 440,520 440,600 380,600 348,565 322,500 308,441 296,400"/></clipPath>
<g clip-path="url(#c3)" stroke="#fff" stroke-width="0.85" fill="none" opacity="0.7">
<path d="M208.4 303.0L284.9 296.3M284.9 296.3L366.2 289.2M366.2 289.2L428.3 283.8M428.3 283.8L501.2 277.4M501.2 277.4L560.5 272.2M560.5 272.2L611.3 267.8M262.2 308.4L366.0 299.3M366.0 299.3L460.1 291.1M460.1 291.1L545.4 283.6M545.4 283.6L662.8 273.4M210.0 321.8L260.6 317.4M260.6 317.4L299.7 314.0M405.6 304.7L498.1 296.6M498.1 296.6L577.4 289.7M577.4 289.7L620.9 285.9M210.9 332.0L249.5 328.6M249.5 328.6L299.0 324.2M299.0 324.2L376.9 317.4M376.9 317.4L417.6 313.9M417.6 313.9L499.7 306.7M499.7 306.7L612.4 296.8M211.6 340.3L305.9 332.1M305.9 332.1L412.7 322.7M412.7 322.7L466.3 318.0M466.3 318.0L498.0 315.3M498.0 315.3L550.7 310.7M212.4 349.2L267.8 344.4M267.8 344.4L343.4 337.8M343.4 337.8L387.6 333.9M387.6 333.9L494.1 324.6M494.1 324.6L572.8 317.7M572.8 317.7L650.6 310.9M266.5 355.4L380.4 345.4M380.4 345.4L480.9 336.7M480.9 336.7L551.4 330.5M551.4 330.5L646.6 322.2M214.1 369.0L275.3 363.7M390.3 353.6L504.6 343.6M504.6 343.6L540.9 340.5M540.9 340.5L579.9 337.0M579.9 337.0L620.5 333.5M214.9 377.2L250.2 374.1M286.2 370.9L367.3 363.8M367.3 363.8L458.6 355.8M458.6 355.8L558.9 347.1M558.9 347.1L595.7 343.8M595.7 343.8L642.1 339.8M215.6 385.5L263.2 381.3M263.2 381.3L330.5 375.4M330.5 375.4L367.4 372.2M367.4 372.2L447.3 365.2M527.5 358.2L584.3 353.2M584.3 353.2L677.1 345.1M216.5 396.6L329.4 386.7M443.1 376.7L516.9 370.3M516.9 370.3L608.3 362.3M217.4 406.0L255.0 402.8M370.9 392.6L410.8 389.1M526.5 379.0L559.3 376.1M559.3 376.1L650.9 368.1M320.5 406.4L356.5 403.3M356.5 403.3L473.8 393.0M473.8 393.0L540.3 387.2M601.2 381.9L700.2 373.2M219.0 424.7L279.0 419.5M279.0 419.5L349.6 413.3M458.6 403.8L501.9 400.0M501.9 400.0L574.8 393.6M574.8 393.6L634.5 388.4M219.9 434.4L296.6 427.7M296.6 427.7L405.1 418.2M405.1 418.2L455.8 413.7M455.8 413.7L515.3 408.5M515.3 408.5L605.6 400.6M222.2 461.4L340.8 451.0M340.8 451.0L402.7 445.6M402.7 445.6L521.4 435.2M521.4 435.2L563.4 431.5M563.4 431.5L663.4 422.8M223.1 471.6L278.7 466.8M278.7 466.8L375.1 458.3M478.4 449.3L553.0 442.8M553.0 442.8L588.7 439.7M588.7 439.7L631.5 435.9M224.0 482.3L337.4 472.4M450.8 462.5L544.7 454.2M591.9 450.1L682.6 442.2M224.9 492.3L295.5 486.1M295.5 486.1L336.1 482.5M450.2 472.6L496.7 468.5M496.7 468.5L531.0 465.5M577.2 461.5L654.4 454.7M225.7 501.5L302.8 494.8M302.8 494.8L340.0 491.5M340.0 491.5L376.8 488.3M376.8 488.3L474.9 479.7M549.9 473.2L609.5 468.0M609.5 468.0L665.7 463.1M226.7 512.6L310.7 505.3M310.7 505.3L382.2 499.0M382.2 499.0L496.8 489.0M496.8 489.0L528.8 486.2M229.1 539.8L317.5 532.0M420.9 523.0L474.2 518.3M474.2 518.3L537.2 512.8M537.2 512.8L623.0 505.3M229.8 548.1L311.8 540.9M311.8 540.9L390.1 534.1M390.1 534.1L449.8 528.9M449.8 528.9L500.6 524.4M500.6 524.4L607.0 515.1M607.0 515.1L651.4 511.2M230.8 559.2L276.0 555.3M276.0 555.3L327.0 550.8M327.0 550.8L371.0 547.0M426.3 542.1L517.8 534.1M517.8 534.1L597.9 527.1M597.9 527.1L710.5 517.3M232.3 576.6L313.7 569.5M385.0 563.3L459.5 556.7M459.5 556.7L546.9 549.1M546.9 549.1L601.9 544.3M601.9 544.3L639.3 541.0M233.0 584.4L334.4 575.5M334.4 575.5L445.2 565.8M445.2 565.8L513.3 559.9M513.3 559.9L628.0 549.8M233.8 593.3L339.1 584.1M339.1 584.1L399.7 578.8M399.7 578.8L448.8 574.5M448.8 574.5L550.8 565.5M550.8 565.5L662.9 555.7M234.7 603.6L337.1 594.6M337.1 594.6L382.8 590.6M382.8 590.6L439.9 585.6M552.2 575.8L628.0 569.2M235.6 613.8L347.1 604.1M524.5 588.6L642.4 578.2M237.1 631.8L355.3 621.5M355.3 621.5L396.4 617.9M396.4 617.9L431.6 614.8M431.6 614.8L530.4 606.1M530.4 606.1L638.6 596.7M238.1 642.8L312.1 636.3M373.6 630.9L418.0 627.0M418.0 627.0L468.4 622.6M468.4 622.6L567.8 613.9M567.8 613.9L643.9 607.2M239.6 660.3L354.0 650.3M354.0 650.3L467.0 640.4M467.0 640.4L522.9 635.5M522.9 635.5L608.3 628.1M608.3 628.1L707.6 619.4M313.9 661.9L421.2 652.5M421.2 652.5L493.5 646.2M493.5 646.2L545.7 641.6M545.7 641.6L627.7 634.4M207.6 294.7L214.4 371.9M214.4 371.9L222.0 459.1M222.0 459.1L227.8 525.5M227.8 525.5L234.2 597.8M234.2 597.8L237.7 638.7M237.7 638.7L245.7 730.0M216.9 293.9L226.8 408.0M226.8 408.0L231.4 460.4M231.4 460.4L241.9 579.7M241.9 579.7L246.0 626.5M249.0 661.5L256.0 740.8M226.8 293.1L231.9 351.6M231.9 351.6L239.6 439.5M239.6 439.5L245.8 510.4M245.8 510.4L249.3 549.8M249.3 549.8L259.4 665.3M240.8 361.5L246.7 429.5M246.7 429.5L255.2 526.2M255.2 526.2L262.9 614.3M254.4 322.3L260.0 387.2M260.0 387.2L263.5 426.6M263.5 426.6L272.8 532.9M272.8 532.9L280.0 615.5M270.3 289.3L276.1 355.9M276.1 355.9L285.7 465.4M285.7 465.4L294.5 566.2M294.5 566.2L300.7 636.3M300.7 636.3L306.7 705.3M278.4 288.6L284.3 355.3M284.3 355.3L293.0 454.5M293.0 454.5L299.3 526.8M299.3 526.8L305.5 597.5M305.5 597.5L315.1 707.9M288.7 287.7L296.6 377.7M296.6 377.7L301.5 434.2M301.5 434.2L311.6 549.2M311.6 549.2L319.4 639.1M319.4 639.1L327.2 727.5M298.9 286.8L309.2 404.5M317.4 498.2L323.2 565.4M323.2 565.4L327.9 618.5M327.9 618.5L332.2 668.2M332.2 668.2L342.7 787.2M319.0 285.0L328.2 390.0M328.2 390.0L335.5 472.8M335.5 472.8L344.0 571.0M344.0 571.0L351.2 652.7M351.2 652.7L359.3 745.9M328.2 284.2L331.9 326.3M331.9 326.3L337.0 385.3M337.0 385.3L347.1 500.4M347.1 500.4L354.2 581.2M360.7 655.4L368.2 741.4M337.9 283.4L346.8 385.5M346.8 385.5L350.6 428.4M350.6 428.4L356.8 499.6M356.8 499.6L367.2 618.3M367.2 618.3L377.3 733.7M356.1 281.8L364.1 373.5M364.1 373.5L369.7 437.5M369.7 437.5L375.1 499.5M375.1 499.5L377.9 531.6M385.7 620.4L390.8 678.2M381.6 279.5L390.0 375.7M390.0 375.7L396.5 449.4M396.5 449.4L399.3 481.8M399.3 481.8L408.7 588.8M408.7 588.8L416.8 681.7M389.9 278.8L394.2 328.3M394.2 328.3L399.3 386.3M399.3 386.3L408.2 489.0M408.2 489.0L415.6 573.5M415.6 573.5L420.0 623.4M400.9 277.8L407.0 347.2M407.0 347.2L416.1 451.3M424.0 541.9L429.4 603.6M429.4 603.6L433.7 652.8M433.7 652.8L443.2 760.9M446.7 356.6L449.7 390.5M449.7 390.5L460.0 508.7M447.5 273.8L455.6 366.0M455.6 366.0L461.8 437.8M461.8 437.8L468.9 518.0M468.9 518.0L474.3 580.2M474.3 580.2L479.2 636.3M479.2 636.3L481.9 667.6M456.9 272.9L460.4 313.0M460.4 313.0L466.7 384.9M466.7 384.9L471.7 442.7M471.7 442.7L480.3 540.2M480.3 540.2L488.0 629.2M488.0 629.2L494.6 704.0M465.3 272.2L471.6 344.1M471.6 344.1L478.4 421.8M478.4 421.8L488.0 531.7M488.0 531.7L490.8 563.6M490.8 563.6L493.7 596.3M493.7 596.3L501.2 681.8M472.9 271.5L482.1 376.4M482.1 376.4L490.1 468.3M490.1 468.3L496.3 538.9M496.3 538.9L503.3 618.4M503.3 618.4L513.7 737.2M491.2 269.9L498.1 348.6M498.1 348.6L503.2 406.2M503.2 406.2L509.8 482.4M509.8 482.4L513.0 519.1M515.7 550.2L521.4 615.0M521.4 615.0L524.9 654.8M502.2 269.0L510.8 367.2M517.9 449.3L524.2 520.8M524.2 520.8L532.1 611.1M532.1 611.1L538.2 681.1M518.0 354.8L522.3 404.4M526.6 453.5L535.2 551.7M535.2 551.7L545.3 667.4M517.6 267.6L522.2 321.0M522.2 321.0L530.5 415.8M546.7 600.3L550.6 644.8M550.6 644.8L560.7 760.6M525.5 266.9L529.5 313.4M529.5 313.4L537.0 398.4M537.0 398.4L539.9 432.2M539.9 432.2L545.5 496.4M545.5 496.4L550.1 548.9M550.1 548.9L554.2 595.4M554.2 595.4L564.4 712.1M541.3 356.6L545.4 403.2M545.4 403.2L550.3 459.1M550.3 459.1L558.4 551.8M558.4 551.8L566.3 641.7M566.3 641.7L571.9 705.9M558.1 342.2L560.9 374.6M560.9 374.6L566.4 437.7M566.4 437.7L570.2 480.9M570.2 480.9L580.0 592.8M580.0 592.8L586.5 667.5M561.5 263.8L565.9 315.1M583.6 517.4L587.7 564.2M587.7 564.2L597.0 669.8M592.8 505.9L595.6 538.3M601.2 602.4L604.2 636.4M604.2 636.4L611.5 720.2"/>
</g>
<clipPath id="c4"><polygon points="166,340 284,340 292,411 313,486 337,555 352,612 353,696 166,696"/></clipPath>
<g clip-path="url(#c4)" stroke="#fff" stroke-width="0.8" fill="none" opacity="0.38">
<path d="M64.5 603.7L92.2 527.5M92.2 527.5L114.4 466.5M114.4 466.5L125.9 434.9M125.9 434.9L142.1 390.4M142.1 390.4L152.7 361.4M152.7 361.4L181.0 283.5M181.0 283.5L208.0 209.5M127.9 694.7L139.4 663.1M139.4 663.1L158.7 610.1M158.7 610.1L193.1 515.6M193.1 515.6L231.8 409.2M231.8 409.2L254.2 347.7M162.9 707.4L199.8 606.0M199.8 606.0L228.7 526.6M228.7 526.6L266.6 422.5M266.6 422.5L304.2 319.0M304.2 319.0L340.3 219.9M224.4 729.8L238.7 690.5M238.7 690.5L250.9 657.1M250.9 657.1L269.7 605.2M269.7 605.2L298.7 525.7M298.7 525.7L322.7 459.7M322.7 459.7L363.3 348.0M363.3 348.0L384.9 288.9M248.2 738.5L264.6 693.5M295.6 608.3L315.9 552.4M315.9 552.4L356.7 440.3M356.7 440.3L369.0 406.6M369.0 406.6L386.4 358.8M386.4 358.8L418.9 269.5M333.7 769.6L358.2 702.3M358.2 702.3L373.1 661.2M373.1 661.2L413.2 551.3M442.4 470.9L453.7 439.8M453.7 439.8L469.6 396.1M469.6 396.1L497.5 319.5M-2.3 620.2L83.7 651.5M83.7 651.5L184.3 688.1M184.3 688.1L222.1 701.9M222.1 701.9L252.4 712.9M283.1 724.1L316.7 736.3M316.7 736.3L355.7 750.5M355.7 750.5L453.6 786.2M4.9 600.4L94.7 633.1M94.7 633.1L169.8 660.4M169.8 660.4L270.9 697.2M270.9 697.2L381.6 737.5M381.6 737.5L475.3 771.6M103.1 552.5L142.5 566.8M142.5 566.8L228.3 598.1M228.3 598.1L323.6 632.8M323.6 632.8L390.3 657.0M390.3 657.0L486.5 692.0M59.2 451.1L91.3 462.8M91.3 462.8L126.3 475.5M167.2 490.4L231.2 513.7M231.2 513.7L324.0 547.5M324.0 547.5L377.1 566.8M377.1 566.8L480.4 604.4M135.0 457.8L174.7 472.2M266.2 505.5L351.5 536.6M351.5 536.6L417.4 560.6M417.4 560.6L449.9 572.4M82.9 386.0L150.9 410.7M150.9 410.7L245.9 445.3M245.9 445.3L277.9 457.0M277.9 457.0L345.9 481.7M345.9 481.7L451.7 520.2M93.7 356.4L174.2 385.7M174.2 385.7L263.6 418.2M429.8 478.7L504.2 505.8M120.8 282.1L213.2 315.7M213.2 315.7L276.9 338.9M276.9 338.9L366.6 371.6M404.8 385.5L447.3 400.9M447.3 400.9L517.5 426.5"/>
</g>
<clipPath id="c5"><polygon points="360,600 440,600 440,696 360,696"/></clipPath>
<g clip-path="url(#c5)" stroke="#fff" stroke-width="0.8" fill="none" opacity="0.7">
<path d="M386.5 575.8L474.1 543.9M312.9 620.6L392.5 591.6M392.5 591.6L502.7 551.5M318.8 636.7L381.7 613.8M381.7 613.8L464.6 583.6M323.8 650.6L419.7 615.8M419.7 615.8L519.2 579.5M340.9 697.7L394.7 678.1M432.8 664.2L515.0 634.3M307.1 604.7L331.9 672.9M331.9 672.9L351.1 725.7M351.1 725.7L370.0 777.4M318.6 600.5L353.6 696.6M359.3 675.4L383.5 741.9M358.6 585.9L398.8 696.4M398.8 696.4L437.4 802.6M419.0 564.0L434.0 605.4M434.0 605.4L462.1 682.4M462.1 682.4L501.8 791.5M435.1 558.1L469.3 652.1M469.3 652.1L484.4 693.6M484.4 693.6L507.4 756.8"/>
</g>
<clipPath id="c6"><polygon points="905,340 1390,340 1390,700 1366,700 1250,570 1100,520 1050,495 905,482"/></clipPath>
<g clip-path="url(#c6)" stroke="#fff" stroke-width=".7" fill="none" opacity=".78">
<path d="M942 371l-7 12M944 378l17 10l-3 5M931 365l14 8l-4 7M927 355l19 11l-5 9M935 370l7 4M924 342l5 3M932 363l13 8M915 366l15 8M925 368l19 11M934 355l-7 11l4 2M943 376l6 3M929 354l20 12M941 360l-12 20M936 346l-7 13M930 376l15 9l-2 4M915 345l17 10M933 353l7 4l-5 9M913 373l20 11l-4 7M909 374l5 3l-2 4M949 377l5 3l-4 8M909 374l-6 10l7 4M946 343l14 8l-4 7M907 391l10 4M932 413l6 2M920 389l6 2l-3 8M923 403l10 4M920 400l11 4l-2 6M918 385l5 2l-4 11M921 398l14 5l-4 10M930 400l-4 11M941 413l-8 21M926 401l-5 15M944 382l-7 18M946 382l13 5M912 403l-3 7l10 4M905 429l-0 19M917 423l-0 18l12 0M929 421l14 0l-0 12M947 425l13 0M910 433l13 0l-0 9M947 457l-0 22l6 0M926 446l17 0M919 421l7 0M943 422l10 0M945 431l-0 7M937 439l-0 19M917 441l18 0M912 459l9 0M948 457l-0 21M931 423l-0 19M907 422l19 0M950 438l-0 18M922 446l-0 6M941 438l9 0M912 499l-8 21l12 4M942 484l-3 7M937 467l10 4l-3 9M921 500l-7 20l8 3M927 463l-8 21l10 4M932 484l-3 8l4 2M934 473l13 5l-1 4M932 468l-8 21M930 497l-2 6l4 2M944 483l-7 18l8 3M921 462l-6 16M919 473l14 5M920 494l-6 16l7 3M945 498l-7 19M938 502l1 7M950 531l1 8M932 505l2 23l13 -1M922 503l18 -2l1 7M932 513l2 18M945 537l1 10l9 -1M908 504l23 -2M929 500l20 -2M942 520l13 -1M907 521l2 22l10 -1M937 513l2 20l9 -1M917 511l22 -2M922 508l0 5M949 524l6 -1l1 9M933 538l11 -1l0 5M906 520l13 -1M919 533l15 -1l1 9M916 545l-4 10M914 552l14 5l-2 6M927 573l20 7l-3 10M905 577l-7 20l12 4M916 574l9 3l-2 5M909 570l13 5M942 551l14 5l-3 8M911 559l22 8M915 580l14 5M929 542l16 6M949 549l6 2M950 550l13 5M942 557l22 8l-1 4M911 592l8 0l-0 12M936 612l-0 14M942 612l9 0l-0 11M926 619l11 0M949 610l-0 22l10 0M908 607l-0 23l9 0M908 598l7 0M938 614l14 0l-0 11M931 596l8 0l-0 5M909 597l-0 8M944 602l8 0M931 606l17 0l-0 8M943 618l16 0l-0 9M923 617l9 0l-0 4M941 615l8 0M916 605l-0 22l9 0M918 610l-0 10M945 594l-0 23l10 0M919 585l-0 6l5 0M940 586l19 0l-0 12M942 613l-0 24M933 603l11 0M944 649l9 0l-0 8M943 642l-0 15M936 642l16 0l-0 8M945 658l-0 11M925 627l20 0l-0 7M914 628l-0 7l10 0M932 645l-0 14l8 0M936 629l-0 19M933 642l20 0l-0 8M938 649l-0 9M927 660l17 0l-0 4M932 649l-0 17l11 0M932 645l-0 15M909 647l18 0M927 627l15 0l-0 12M913 648l-0 8M909 654l-0 5M925 646l14 0l-0 8M944 625l15 0M924 668l-12 21l7 4M932 697l8 5l-4 7M914 669l-6 10l8 5M934 697l-4 7M937 674l-7 11l11 6M932 685l-6 11l7 4M911 697l11 7l-3 5M921 665l-8 13M949 692l20 11l-6 11M920 687l11 6M933 689l8 5l-5 8M926 674l16 9l-3 5M912 690l12 7l-5 8M907 673l11 6l-6 11M917 695l5 3l-3 5M933 670l-10 17M910 662l-3 5M932 673l-7 12M915 689l-4 8l8 4M906 693l18 11l-5 8M916 660l-6 10M936 670l-3 4l7 4M964 361l12 1M950 359l15 1M961 356l-1 10l10 1M969 371l15 1l-1 6M963 378l-1 14l10 1M955 349l7 1M993 355l-0 5M952 371l6 1M985 349l-1 15M974 347l6 1M977 358l-1 17M968 374l-1 15M987 371l-2 18l5 0M980 350l-1 17M969 350l-1 11M964 353l13 1M984 371l-2 20M970 358l17 2M969 362l15 1l-1 6M993 385l6 21M963 381l21 -6l3 12M980 413l20 -5M954 395l4 14l10 -3M956 390l2 6M982 397l6 22M989 387l3 10M993 407l2 6l6 -2M984 405l5 21l8 -2M971 394l15 -4l1 5M951 401l18 -5M977 406l3 10l11 -3M961 418l17 -5M957 395l12 -3l1 5M968 384l19 -5M969 419l6 21M991 417l3 12l7 -2M965 405l1 5l8 -2M972 414l16 -4M961 405l3 12l6 -2M964 418l11 -3M987 445l10 17M988 445l15 -8l4 7M981 435l9 15M980 457l7 12M957 437l7 13l6 -3M981 421l4 7M974 455l16 -9M962 437l7 -4l2 4M992 438l12 21l8 -5M986 436l10 -6l5 9M965 439l6 10l10 -6M964 460l3 5M976 452l15 -8M970 447l18 -10l6 10M957 479l-0 24M985 499l12 0M951 479l-0 10M989 480l18 0M992 485l-0 14l6 0M959 492l15 0M987 486l-0 8l9 0M971 467l10 0l-0 4M979 487l-0 10l8 0M992 486l-0 14M964 463l-0 19M955 490l-0 8M979 463l-0 12l4 0M969 494l17 0l-0 12M988 488l-0 9l6 0M964 498l6 0M984 471l-0 6M991 483l-0 7M987 490l-0 15l8 0M979 492l-0 16l12 0M990 474l-0 6M993 482l-0 19l10 0M988 539l22 -6l3 12M992 527l22 -6M979 538l5 -1M978 514l13 -3M978 522l23 -6l1 5M956 522l15 -4l3 12M994 508l13 -3M992 520l3 12M984 512l11 -3l1 5M994 537l5 17M974 534l14 -4M961 515l3 11l7 -2M975 508l5 20l4 -1M963 538l23 -6M978 529l13 -4M985 514l10 -3l2 6M989 564l16 -4l3 10M978 556l7 -2l2 8M961 563l9 -2M975 578l5 -1M954 565l2 6l7 -2M957 569l11 -3l3 10M976 560l19 -5M972 564l7 -2M952 566l3 13M979 547l16 -4M961 565l15 -4l2 9M974 545l3 10M986 567l4 15l12 -3M968 559l9 -3l3 9M957 551l4 13M969 557l2 8M972 540l16 -4M971 548l23 -6M965 545l7 -2M987 557l10 -3l3 11M952 561l7 -2l1 4M971 574l5 20l7 -2M961 582l15 5l-3 8M964 587l19 7M966 617l12 4M970 613l-3 8l10 3M992 590l20 7M991 619l5 2M985 604l21 8l-4 11M980 605l6 2l-1 4M972 600l10 4l-3 8M988 592l-3 10M964 618l-4 10M967 582l12 4l-4 11M952 591l-2 6l10 4M974 604l20 7M973 600l-7 19M975 620l5 2l-3 8M977 583l-4 10M958 657l3 16l5 -1M987 644l5 23M958 650l4 21l10 -2M960 628l5 23l11 -2M979 637l16 -3l2 8M955 648l5 23l5 -1M974 622l5 22l11 -2M968 650l14 -3M952 621l11 -2M978 629l2 9M970 630l18 -4l1 4M951 634l12 -3M981 650l2 8l4 -1M950 643l12 -3M953 622l22 -5l1 7M978 621l15 -3l2 9M965 632l2 11l5 -1M964 651l1 6M952 682l-0 14M987 670l-0 24l6 0M993 692l-0 19l12 0M963 691l15 0M991 693l-0 12l7 0M964 662l13 0M987 679l6 0M963 664l-0 13l7 0M975 690l-0 13l11 0M954 697l15 0M990 665l-0 22l11 0M982 683l12 0M985 698l-0 6M960 661l-0 22M965 678l20 0M982 679l-0 23M959 676l11 0M995 696l-0 21M983 664l13 0l-0 12M967 670l-0 7l13 0M979 677l8 0M1003 350l-5 9M1016 372l18 10M1018 375l9 5M1025 350l-9 16l5 3M1012 370l15 9M1036 373l-8 13M1000 376l16 9l-5 8M1028 368l14 8l-5 8M1011 374l-11 19l8 5M1037 354l-5 9l8 4M1002 346l-10 17M1036 346l19 11l-6 11M996 368l-3 5M1020 369l18 10M1012 350l-10 18M1010 360l19 11M1022 348l-6 11l10 6M1031 373l12 7M998 361l5 3l-5 8M1029 362l4 3M1038 417l20 -5M1037 416l6 23M1027 397l4 15M996 398l6 21l12 -3M1029 389l5 18l12 -3M1014 414l5 -1l2 6M1025 412l4 17l6 -2M1013 412l5 18M1019 410l5 20M1033 413l8 -2M1032 388l5 20l5 -1M1025 405l2 8l11 -3M1038 385l5 18M1015 396l2 9l12 -3M997 416l1 5M1009 404l12 -3M1017 412l5 -1l3 11M996 381l12 -3M1034 390l18 -5M999 445l15 -9l3 6M1039 439l5 -3l2 4M1004 455l14 -8l6 10M1002 436l10 16M1033 454l10 18l8 -4M1021 456l17 -10M1038 430l5 9l5 -3M1008 438l12 -7l5 9M1013 433l6 -3M1024 456l10 18M1006 420l4 8M1001 449l8 13M1011 425l14 -8M1014 420l3 4M1008 480l13 8M1016 490l-3 5M1024 487l21 12l-5 9M996 484l-6 11M1036 463l10 6l-6 11M1036 473l14 8M1029 491l19 11M1006 477l-12 20l6 3M1007 478l-3 5l8 4M1028 477l-3 6M1002 478l17 10l-4 8M1003 476l17 10l-5 8M997 490l-9 15M1015 512l3 6l11 -6M1003 519l20 -11M1018 512l9 -5l2 4M999 532l8 14M1018 508l6 10M1002 519l10 18l4 -2M1024 512l9 16l5 -3M1005 533l9 15M1017 516l8 -5l5 9M1033 508l3 5l6 -4M1000 537l7 -4l5 9M1037 515l10 18l9 -5M1021 539l3 5l5 -3M1039 524l7 12M1037 501l5 9l6 -3M1012 521l19 -11l5 9M1007 506l4 6M1011 518l3 5l8 -4M1007 538l11 20l4 -2M1029 508l17 -10l5 9M1036 511l4 6M1010 516l10 17M1016 545l13 -4l2 9M998 555l22 -6M1011 544l6 21l10 -3M1020 566l4 14M1016 551l5 20l10 -3M1040 567l2 8l11 -3M1001 569l22 -6l3 10M1006 571l4 14M1033 554l6 21l11 -3M1024 567l2 8l8 -2M1000 554l20 -5l3 11M1034 553l15 -4M1031 559l1 5M1029 551l5 17l9 -2M1008 574l4 17l4 -1M1017 561l2 9l6 -2M1030 571l14 -4M1010 549l2 6l6 -2M998 564l6 22l10 -3M1019 572l4 16l11 -3M998 541l5 18l12 -3M1025 571l5 18l11 -3M1020 609l19 3M1005 612l11 2M1039 610l16 3l-2 9M1019 588l7 1M1027 607l-4 20M1010 615l-3 16M1004 593l23 4l-1 4M1023 587l-1 7M1006 585l-3 20l5 1M1018 598l9 2M1012 603l-3 19M1031 601l-4 21l6 1M1035 604l-2 13M997 606l20 4M998 594l8 1M1034 640l15 -9l4 6M1032 651l12 20M1004 631l16 -9M1018 637l5 8l7 -4M1038 645l21 -12l6 10M1030 625l7 11M1004 621l10 -6l4 7M1021 656l3 6l8 -5M1033 643l8 14M1035 651l20 -12M1000 626l12 -7l6 11M1031 657l11 19M1018 625l9 15l6 -3M996 638l18 -11l4 6M1012 629l10 17l10 -6M1000 698l4 7l4 -2M1025 670l19 -11M1015 662l9 -5M1030 697l7 -4l3 6M1004 690l3 4l6 -3M1008 678l11 20l11 -6M1006 668l9 15M1018 689l6 10M1031 682l19 -11M1015 698l6 10M1020 694l18 -11M1019 676l4 6M1028 683l6 -3l2 4M1012 675l11 -6l6 11M1020 669l12 -7l3 5M1029 697l8 15M1063 368l11 4l-4 11M1070 342l19 7M1048 352l-3 9M1080 360l6 2l-2 5M1048 352l-3 7l8 3M1075 347l14 5l-4 12M1066 352l-6 16l9 3M1072 376l-8 22M1071 372l8 3M1060 341l18 7l-4 12M1049 373l-3 9l9 3M1071 369l-3 8l6 2M1075 346l12 4M1049 406l1 14M1059 399l19 -2l1 7M1080 411l1 16l9 -1M1084 416l19 -2l1 12M1078 395l13 -1l1 7M1045 419l6 -0M1076 382l1 16M1045 383l2 22l11 -1M1043 395l15 -1M1073 388l1 7M1053 417l20 -2l0 4M1054 401l19 -2l1 12M1044 408l18 -2M1074 385l1 17M1081 412l20 -2M1040 417l21 -2M1074 407l6 -0l1 7M1078 380l2 17M1057 460l18 2l-1 8M1041 428l21 2M1041 448l-2 21M1085 454l-2 21l6 0M1072 422l-2 23M1052 430l6 1l-1 8M1067 457l9 1l-1 12M1065 460l-1 10M1082 437l-1 9l13 1M1052 426l13 1l-1 8M1059 451l-1 9M1052 423l19 2M1066 420l-1 9l13 1M1051 444l18 2l-1 8M1072 432l-1 13l12 1M1077 446l-1 10M1067 442l-2 18M1084 448l-1 11l5 0M1072 420l-1 8M1043 462l4 16l6 -2M1041 466l11 -3l3 12M1085 499l2 8l8 -2M1063 473l19 -5M1074 485l6 -2M1083 470l5 17M1046 468l2 6l10 -3M1047 486l10 -3M1083 468l19 -5l3 10M1044 494l21 -6M1069 499l14 -4M1052 497l11 -3M1074 467l5 17l9 -2M1070 489l12 -3l2 9M1075 502l19 2M1077 514l7 1l-1 13M1076 501l-0 5l9 1M1078 534l-1 8l8 1M1047 510l9 1M1052 511l7 1M1060 518l-1 7l11 1M1042 512l14 1M1066 528l6 1l-1 8M1059 504l7 1l-1 10M1083 524l-1 9l7 1M1076 511l11 1l-1 12M1062 529l14 1l-1 9M1054 521l5 0l-1 8M1064 536l-2 21l7 1M1078 505l12 1M1074 537l-1 8M1065 518l20 2M1082 515l15 1M1078 516l12 1M1069 559l19 -11M1057 554l10 18M1063 542l20 -12l3 6M1052 576l9 -5M1057 552l9 16l7 -4M1065 576l11 19l4 -2M1063 565l6 -3M1043 556l5 10l7 -4M1063 554l6 10M1059 566l7 -4M1054 548l10 18l4 -2M1040 561l8 -5l6 10M1075 551l16 -9M1071 571l13 -8l4 6M1055 543l7 -4l4 8M1078 553l10 -6M1053 569l19 -11l5 9M1062 563l10 18l8 -5M1054 541l12 -7l3 5M1057 556l5 -3M1084 549l11 -6M1054 579l11 -6l6 11M1042 618l-5 12M1041 598l-6 15M1083 614l10 3M1059 593l20 7M1051 613l22 8M1052 598l-5 14M1076 615l18 6M1055 609l7 3l-3 8M1049 592l-4 11l8 3M1069 608l-2 6l6 2M1081 597l9 3l-4 11M1062 597l-5 14M1054 618l7 2l-3 8M1079 615l5 2l-4 10M1048 620l-2 6l4 2M1057 606l20 7l-3 9M1062 584l-6 17M1042 601l-3 7l9 3M1070 588l19 7l-3 8M1079 596l-3 9l6 2M1052 601l20 7l-4 11M1069 645l5 22M1052 631l2 9l9 -2M1084 630l13 -3l2 10M1043 631l6 -1M1047 629l2 8l9 -2M1070 647l3 15M1052 649l21 -4l3 12M1065 652l20 -4l2 8M1061 645l3 16M1075 659l2 7M1051 621l20 -4l2 8M1041 647l4 18l10 -2M1056 631l5 23M1078 646l15 -3M1056 648l4 20l10 -2M1043 631l5 -1M1080 664l1 8l7 -1M1076 693l13 -1M1085 685l12 -1l1 9M1072 669l2 19M1064 676l0 5M1080 699l17 -2M1059 699l23 -2l0 4M1070 680l17 -1M1044 668l19 -2l1 10M1084 697l2 22l5 -0M1066 681l21 -2M1043 690l7 -1M1084 692l20 -2M1064 680l16 -1l1 11M1129 377l18 -10M1107 372l19 -11l6 10M1129 354l14 -8l5 8M1116 376l10 -6l6 11M1108 377l20 -12M1090 360l15 -8M1116 354l13 -8l3 5M1127 365l8 13M1119 356l13 -8l6 11M1089 355l18 -11M1086 346l7 12M1125 373l4 7l7 -4M1101 341l4 8M1118 381l16 1l-1 10M1094 394l5 0l-0 5M1089 396l-1 7l7 1M1088 412l9 1l-1 12M1126 399l16 1M1119 390l21 2l-1 7M1111 390l15 1l-0 5M1120 398l-1 15l6 0M1103 410l19 2M1096 418l-1 17l9 1M1117 401l19 2M1099 401l8 1M1086 388l-1 15M1116 409l16 1M1098 380l-1 15l11 1M1113 381l-1 15M1098 416l-2 18M1128 455l18 10M1117 437l16 9M1095 428l-5 9l9 5M1113 449l-3 5M1123 421l14 8M1117 450l-11 19M1112 456l19 11l-2 4M1117 437l-11 20M1116 441l-6 10M1114 445l15 9l-4 7M1115 454l13 8M1092 424l18 10M1103 458l17 10M1125 451l14 8l-4 7M1088 453l17 10l-6 10M1118 449l-3 6M1099 439l-12 20l9 5M1113 434l19 11l-3 5M1124 426l19 11l-3 5M1103 431l16 9l-3 5M1125 481l6 22l9 -2M1128 472l11 -3M1110 484l4 16M1110 478l3 11M1107 464l17 -4l2 6M1103 469l9 -2l2 6M1117 464l20 -5l3 11M1102 475l5 -1M1107 477l16 -4l3 11M1113 473l21 -6l3 11M1123 471l23 -6l2 8M1110 482l4 13l8 -2M1115 496l9 -3l2 6M1108 498l2 9M1107 474l2 7M1085 520l-2 12l12 2M1125 501l-4 21l6 1M1097 500l-1 7l12 2M1109 521l-1 7M1100 519l-1 5M1092 505l-2 12M1127 510l19 3l-2 9M1110 518l12 2l-1 7M1091 515l-1 6M1105 529l-4 21M1101 509l-4 23M1114 512l-1 6l13 2M1105 517l6 1M1127 525l11 2l-2 11M1123 505l-3 14l9 2M1085 502l-4 22l8 1M1129 514l-4 21M1093 540l19 7M1108 556l15 5M1123 542l-4 10l5 2M1121 580l22 8l-1 4M1090 553l-8 22l7 3M1110 546l6 2l-1 4M1129 579l13 5M1123 556l-8 21l9 3M1128 552l-8 22M1089 556l16 6M1103 563l19 7M1118 571l10 4M1105 559l-5 15l6 2M1091 561l-3 8l8 3M1120 551l6 2M1101 578l7 3l-2 7M1090 600l19 0M1113 594l12 0l-0 8M1109 612l6 0M1101 609l22 0l-0 11M1099 600l-0 5l6 0M1094 617l22 0l-0 7M1101 595l23 0l-0 9M1112 593l19 0l-0 12M1094 608l23 0M1120 594l22 0M1129 601l22 0M1107 608l-0 19M1095 606l-0 20l9 0M1086 619l17 0M1099 602l-0 20M1109 641l7 -4M1129 653l4 7l6 -3M1121 657l3 5M1116 626l6 10l5 -3M1107 627l9 -5l2 4M1104 634l7 -4l2 4M1098 622l16 -10l3 5M1116 659l16 -9l3 5M1125 623l10 17M1104 637l6 10l9 -5M1105 654l14 -8l3 5M1126 622l11 -6M1090 647l7 -4l2 4M1130 622l11 19M1112 642l7 12l5 -3M1111 652l12 20M1094 642l4 7M1102 633l19 -11l5 9M1104 625l18 -11l4 8M1096 633l7 12M1127 697l-1 5M1117 689l17 3M1121 670l15 3l-2 9M1091 660l-3 16M1086 672l-1 7M1092 679l-3 18l9 2M1094 662l-1 8l12 2M1098 661l-3 17M1105 697l-3 18M1097 677l-2 9l8 1M1102 667l-3 16l5 1M1113 685l-3 15M1119 684l-4 22M1094 673l12 2l-1 6M1090 682l-2 13M1164 363l23 0M1137 360l11 0l-0 6M1160 344l8 0M1156 347l24 0M1164 357l19 0l-0 12M1149 379l-0 15M1164 365l-0 6M1162 342l-0 7l10 0M1168 347l7 0M1150 352l-0 8M1131 366l-0 6l9 0M1140 360l18 0M1156 346l-0 17M1134 370l-0 16M1146 394l16 -4l1 5M1158 388l17 -5M1143 414l18 -5l1 4M1156 395l3 10l9 -2M1167 419l6 23M1136 399l19 -5M1171 417l6 -2M1130 381l4 16l8 -2M1146 410l3 11l5 -1M1152 389l22 -6M1152 389l4 16l10 -3M1160 396l4 16l12 -3M1148 381l11 -3M1137 390l2 9l10 -3M1142 394l3 10M1150 384l16 -4l2 8M1155 382l9 -2l2 8M1147 413l2 8l11 -3M1165 397l4 16l5 -1M1147 400l2 9M1135 399l9 -2l1 5M1153 423l22 -6l3 11M1173 435l4 13l5 -1M1140 434l5 -1M1168 453l10 -3M1132 437l3 12M1175 459l4 16M1139 440l3 10M1135 446l4 17l9 -2M1135 437l11 -3l2 8M1135 441l2 6l8 -2M1130 451l6 22l8 -2M1164 423l11 -3l2 8M1146 426l16 -4l2 9M1140 443l3 11M1130 433l19 -5M1169 457l19 -5l1 5M1143 430l5 19M1164 437l17 -4l2 8M1169 440l21 -6l1 5M1149 432l7 -2M1141 480l-2 11l9 2M1165 471l-2 9M1170 493l14 2M1156 465l12 2M1165 485l6 1l-2 10M1164 468l18 3l-2 12M1140 486l-4 22l8 1M1148 466l-3 20M1152 469l10 2M1153 475l23 4l-1 6M1143 470l14 3l-2 11M1146 484l-3 14M1172 474l9 2M1135 472l21 4M1148 469l-4 23l5 1M1155 463l23 4l-1 4M1152 482l-1 7M1150 514l17 3l-1 6M1137 504l-3 17M1142 508l7 1M1146 515l-2 9l12 2M1131 537l13 2M1141 537l-3 15M1160 534l7 1l-1 8M1142 536l9 2l-1 7M1162 520l20 3M1168 516l-4 22l9 2M1169 509l21 4M1147 538l21 4l-2 9M1155 512l22 4M1140 529l15 3M1142 505l18 3M1149 522l-3 18l5 1M1152 506l20 3l-1 5M1142 515l10 2l-2 10M1136 520l17 3M1164 510l6 1M1132 524l-3 16l8 1M1151 530l7 1l-1 8M1148 579l-5 8l10 6M1135 552l-7 11l7 4M1166 560l-9 16M1141 553l-8 13M1168 571l-8 14M1166 547l8 5M1144 573l-5 9M1175 563l14 8M1140 545l-11 18l5 3M1172 567l19 11l-4 7M1134 541l14 8M1164 567l14 8M1160 550l12 7M1149 549l-9 16l4 2M1156 578l-3 6M1162 541l11 6M1174 568l-8 14l11 6M1158 618l-1 7M1156 611l-3 18M1142 618l12 2M1137 599l17 3M1142 603l-1 7l10 2M1173 598l10 2M1169 596l13 2l-1 8M1165 605l-2 10l7 1M1162 615l-3 14l12 2M1170 581l-4 23l4 1M1143 600l-3 15l8 1M1175 613l7 1l-2 12M1163 614l-2 13M1156 589l13 2M1144 618l-1 6l5 1M1167 620l10 2l-1 5M1140 611l-2 13l10 2M1162 616l22 4M1170 605l-3 18M1162 625l-0 17M1170 634l-0 7M1159 656l-0 16l10 0M1147 632l-0 19l9 0M1158 649l-0 5M1133 635l-0 16l8 0M1168 624l-0 24l8 0M1131 628l14 0l-0 8M1133 620l-0 15l8 0M1173 621l-0 14l12 0M1136 638l16 0M1146 633l-0 12l6 0M1141 656l20 0M1151 636l-0 19l5 0M1131 656l17 0l-0 7M1137 633l5 0M1154 652l-0 19l13 0M1146 655l-0 9M1168 647l24 0l-0 6M1133 641l6 0l-0 11M1152 625l-0 19M1140 622l-0 7M1132 662l1 9M1137 667l22 -3l1 7M1144 694l8 -1M1138 663l23 -3l1 10M1146 666l2 11M1140 666l18 -2M1164 683l18 -3l1 7M1152 699l8 -1l2 11M1172 672l2 14M1163 687l2 12l6 -1M1132 691l2 11l8 -1M1173 692l3 21M1135 694l3 22M1153 670l2 15l7 -1M1156 696l2 17l12 -2M1144 690l3 20l11 -2M1213 345l20 -4l2 8M1216 355l3 15M1196 359l17 -4l2 10M1179 349l3 13l9 -2M1214 372l5 -1M1216 350l3 12l11 -2M1196 365l21 -5l1 6M1204 371l16 -3l1 4M1176 365l4 18l13 -3M1218 371l20 -4M1203 351l2 9M1208 351l13 -3l2 10M1197 362l5 23l6 -1M1187 342l3 12l13 -3M1193 394l3 16l9 -2M1196 395l8 -2l2 10M1188 415l9 -2l2 10M1213 415l3 14l9 -2M1180 415l13 -3l2 8M1184 419l6 -1l1 6M1198 383l4 17M1190 405l2 11M1183 407l20 -4l2 8M1198 404l19 -4M1207 390l9 -2M1214 401l15 -3M1176 408l3 14M1180 400l23 -5M1210 446l8 0l-0 8M1211 458l15 0l-0 12M1179 438l-0 10l4 0M1183 441l-0 13l10 0M1217 421l14 0l-0 6M1209 430l24 0l-0 10M1181 427l-0 11M1202 431l-0 16l5 0M1177 438l-0 23M1185 435l9 0M1176 441l-0 9M1209 434l22 0l-0 5M1206 439l16 0l-0 11M1204 457l-0 13l12 0M1197 492l12 0l-0 13M1198 479l8 0l-0 6M1191 474l17 0M1213 460l-0 14l12 0M1219 463l-0 11l11 0M1211 460l14 0M1179 487l-0 5l12 0M1219 493l18 0M1194 490l-0 24l9 0M1199 496l11 0M1202 480l16 0l-0 8M1199 489l13 0M1216 468l21 0l-0 11M1199 497l13 0l-0 10M1186 486l-0 9l10 0M1184 475l23 0l-0 13M1183 515l15 1l-1 8M1197 519l-2 24M1210 519l-1 17M1176 535l17 1M1207 513l16 1M1192 512l14 1l-1 6M1195 510l-1 15M1211 507l-2 21l10 1M1212 504l15 1l-1 12M1216 504l-1 9M1187 520l15 1l-1 13M1218 511l23 2l-1 9M1186 510l-1 6M1218 518l-2 21M1182 517l16 1l-1 7M1179 516l-1 15M1211 510l-2 20M1185 540l-2 21l7 1M1180 511l11 1M1207 509l15 1M1179 537l-2 22l8 1M1206 524l20 2l-0 4M1176 546l-4 22l8 1M1213 543l-4 23M1194 574l-2 11l11 2M1184 550l11 2M1186 549l-2 10l8 1M1192 571l20 3l-2 13M1185 568l-4 21M1176 573l-2 13l13 2M1180 569l11 2M1215 563l15 3M1180 549l-2 12M1189 550l-2 10l6 1M1183 548l-1 8l4 1M1184 551l18 3M1189 558l-4 21M1182 561l9 2l-2 11M1215 605l-2 21l6 0M1186 584l-1 10M1195 602l-1 17l7 1M1198 603l8 1M1209 591l-2 23M1198 587l11 1l-0 5M1176 620l5 0l-1 13M1190 592l-1 14M1206 583l-2 22l11 1M1216 614l23 2M1210 613l-1 16M1192 618l13 1M1192 612l-2 22M1190 600l-1 12l8 1M1210 585l-2 20M1206 590l-2 22l5 0M1184 581l10 1l-0 4M1180 589l7 1l-0 5M1201 595l18 2M1188 597l10 1M1175 645l6 0l-0 6M1192 633l-0 11l12 0M1207 655l13 0M1220 623l-0 18M1181 660l-0 11l5 0M1199 632l-0 11M1201 646l18 0M1202 660l-0 20l8 0M1182 632l-0 6l9 0M1212 651l21 0l-0 8M1201 659l12 0l-0 5M1209 642l-0 10l6 0M1178 651l-0 21M1218 620l-0 8M1191 629l-0 10l8 0M1208 649l-0 20l6 0M1198 650l-0 10l6 0M1192 627l8 0l-0 9M1200 626l19 0M1180 673l-3 7l4 2M1195 673l19 7l-2 6M1180 681l-8 21M1175 686l-3 7M1218 683l9 3M1191 673l-5 14M1176 693l-6 17M1205 671l-4 11l11 4M1187 678l-8 22M1175 676l-3 7M1187 697l21 8M1207 667l-3 7M1189 691l16 6M1188 667l13 5M1177 699l-8 22M1219 662l11 4l-3 10M1212 678l6 2M1219 675l-2 5M1177 680l-4 11M1217 677l-4 11l7 3M1189 667l-7 20M1230 351l-4 7l4 3M1257 345l20 12M1264 350l19 11M1240 362l-9 16l9 5M1259 360l12 7l-5 8M1232 355l20 11l-5 9M1247 374l6 4l-3 5M1238 371l18 10M1228 358l6 4M1252 360l19 11l-5 9M1226 358l11 7l-3 5M1244 354l14 8M1260 365l18 10l-6 10M1229 343l17 10M1239 342l12 7M1258 357l14 8M1264 349l14 8M1223 357l-6 10l5 3M1244 373l20 12l-3 6M1259 412l1 8l9 -1M1248 410l9 -1M1248 409l9 -1M1239 419l3 23M1260 412l1 6M1228 384l22 -3l1 7M1236 392l8 -1M1222 399l3 23l9 -1M1229 386l3 21M1221 381l11 -2l2 12M1241 419l6 -1l2 13M1260 385l2 12M1238 404l2 14l9 -1M1234 437l3 16M1224 458l2 8l5 -1M1250 436l21 -4l1 5M1240 427l8 -2M1256 436l11 -2M1237 448l7 -1M1220 456l21 -4l2 7M1236 434l13 -3l1 5M1226 428l13 -3l2 9M1245 431l4 18l12 -2M1246 426l14 -3l2 12M1238 440l5 -1M1261 438l5 23l11 -2M1247 479l9 0M1259 476l-0 21l11 0M1258 474l22 0l-0 12M1256 469l15 0M1225 500l22 0M1240 484l22 0l-0 7M1244 489l9 0l-0 4M1229 498l13 0l-0 8M1231 468l14 0M1239 462l-0 6M1247 498l11 0l-0 13M1260 483l19 0l-0 6M1247 491l-0 16l11 0M1252 495l15 0l-0 10M1233 499l-0 18l9 0M1255 499l-0 7M1237 475l-0 7l7 0M1229 494l-0 6l8 0M1232 462l6 0l-0 6M1236 503l10 1l-1 8M1245 506l-2 21M1261 504l9 1M1225 504l13 1l-1 11M1228 538l10 1M1239 534l-1 10l9 1M1229 521l-1 11l6 1M1235 507l16 1l-1 10M1232 529l-2 19l10 1M1264 536l22 2M1247 522l23 2l-1 10M1221 537l17 2M1264 515l22 2l-1 13M1227 517l-1 16M1230 508l15 1l-1 13M1224 519l-1 13M1265 537l-1 10M1230 520l-1 9M1230 514l-1 10l4 0M1253 502l24 2l-1 9M1263 537l14 1l-0 5M1241 549l18 6l-4 12M1225 566l-7 19M1264 545l7 3M1229 566l13 5M1226 563l9 3l-2 5M1256 557l7 2M1255 571l-7 18l9 3M1244 541l20 7l-2 7M1262 579l-8 21l8 3M1258 542l21 8l-3 8M1226 562l-5 15M1225 556l9 3M1247 544l16 6l-2 5M1229 578l10 4M1236 548l-6 15M1231 559l-3 9l5 2M1231 574l-5 12l5 2M1235 544l-7 19M1226 542l-6 18M1252 552l-6 17l9 3M1226 569l-5 13l10 4M1250 574l-7 19M1222 618l1 5l6 -1M1262 599l3 14M1221 606l1 7l11 -2M1252 606l20 -4l1 4M1239 610l5 -1M1236 618l18 -4l2 11M1252 591l3 14M1257 596l5 22M1263 604l15 -3l2 12M1243 595l8 -2l2 8M1249 586l9 -2l2 9M1258 616l17 -4M1246 613l8 -2l1 4M1244 601l4 21M1241 621l3 16l10 -2M1246 620l10 -2l2 8M1234 648l20 -4l1 6M1244 635l18 -4l2 11M1232 636l19 -4l2 8M1225 642l5 -1M1246 638l21 -5l1 6M1254 635l6 -1l1 5M1238 656l2 11l8 -2M1257 627l7 -2l1 6M1230 628l16 -3M1228 634l2 9l7 -1M1226 643l2 10l9 -2M1244 657l2 10l9 -2M1251 621l11 -2l2 11M1225 637l2 8M1247 699l4 21l6 -1M1253 677l15 -3l2 8M1228 684l4 18l6 -1M1238 680l14 -3l2 10M1225 665l16 -3M1246 665l3 16M1220 683l21 -4M1233 673l5 23l4 -1M1221 692l5 -1M1224 683l4 17l9 -2M1260 683l20 -4l1 7M1230 691l8 -2l1 6M1254 688l3 14l9 -2M1223 686l2 11M1254 680l4 19l12 -2M1261 664l2 11M1249 666l21 -5l2 9M1250 671l1 7M1236 666l21 -5l2 9M1236 694l12 -3l1 6M1236 693l4 17M1274 341l2 8l5 -1M1295 346l5 23M1306 377l21 -5l1 5M1265 354l3 13l5 -1M1283 367l16 -3l2 10M1273 354l4 20l5 -1M1275 371l19 -4l2 8M1287 354l6 -1M1306 340l20 -4l2 11M1265 348l13 -3M1266 361l7 -1l1 5M1271 355l5 23l6 -1M1283 348l19 -4M1284 349l7 -2l2 8M1267 357l2 9M1284 343l3 16l9 -2M1303 350l2 12l10 -2M1273 351l4 20l10 -2M1273 364l3 15M1276 387l22 8l-3 9M1267 417l-6 17l9 3M1265 413l20 7M1275 392l-4 12M1273 418l17 6M1278 381l12 4M1274 390l6 2M1275 408l21 8l-2 5M1284 397l-4 11M1291 385l-5 14l6 2M1282 393l-6 15l7 2M1268 386l-3 9M1282 413l22 8M1288 389l7 3M1282 407l18 6l-3 9M1301 385l16 6M1289 419l-7 19l6 2M1277 384l-8 22M1271 418l-5 14l11 4M1267 396l-4 12M1290 397l17 6M1306 399l-5 13M1292 433l23 4M1289 443l14 3M1299 456l16 3l-1 4M1273 427l8 1l-1 5M1268 421l-1 8l6 1M1296 458l19 3l-2 11M1272 425l-4 23M1267 430l12 2M1275 443l-3 19l8 1M1266 420l11 2M1304 458l-3 15M1301 436l17 3M1283 453l-3 15M1296 440l11 2l-1 8M1265 448l-2 10M1301 420l-4 23M1270 460l11 2M1267 446l-4 21l6 1M1294 494l3 5M1278 497l6 -4l5 9M1301 467l19 -11M1290 490l9 -5l6 11M1276 490l9 16M1291 461l12 20M1280 461l8 14l5 -3M1278 495l11 18M1291 483l13 -8M1271 493l7 12M1274 462l18 -10M1271 476l9 15M1283 495l9 15M1266 495l7 13M1308 478l7 13l4 -3M1303 468l6 -3M1286 488l8 14M1265 471l9 -5l6 10M1279 485l3 6M1267 464l7 11l7 -4M1266 481l20 -12M1285 464l4 6l8 -5M1272 532l10 0l-0 12M1267 516l-0 24l5 0M1298 517l17 0l-0 6M1292 501l19 0l-0 9M1310 505l-0 14M1280 533l-0 10M1298 500l11 0M1293 506l7 0l-0 11M1307 514l-0 10M1270 522l-0 14M1270 530l-0 8M1276 524l14 0l-0 5M1289 533l-0 18M1275 512l-0 12l6 0M1294 539l6 0M1294 531l6 0M1280 529l-0 5l11 0M1299 522l16 0l-0 10M1308 558l19 0M1284 562l18 0M1300 578l23 0M1268 547l-0 14M1295 577l23 0l-0 11M1267 551l18 0M1285 575l-0 13M1282 553l-0 9l11 0M1294 571l-0 12M1283 551l-0 9M1279 579l-0 7l6 0M1294 542l23 0M1306 546l10 0l-0 10M1293 573l-0 7l12 0M1265 575l9 0M1278 546l5 0l-0 12M1305 572l-0 18M1266 550l18 0l-0 11M1288 562l18 0M1296 541l8 0M1268 553l16 0l-0 12M1290 549l-0 11M1275 606l10 -2M1292 607l8 -2M1292 617l2 11l8 -2M1299 608l2 8M1271 610l21 -5l1 4M1291 589l19 -4M1287 604l10 -2l2 8M1276 614l5 23M1268 603l7 -1l2 12M1291 582l3 14M1307 619l22 -5M1303 618l1 5l12 -3M1271 600l15 -3M1273 599l4 21l11 -2M1273 614l22 -5l1 5M1302 615l4 18l5 -1M1299 602l2 11M1289 609l2 8l5 -1M1278 605l3 13l11 -2M1276 631l10 18l9 -5M1278 654l10 17M1281 647l7 -4M1272 657l5 -3l5 9M1278 643l18 -10l6 11M1272 626l12 20l6 -3M1293 652l10 -6M1301 632l8 14M1305 641l20 -12l6 11M1306 633l4 8l5 -3M1303 628l11 19l6 -3M1272 653l17 -10l4 6M1289 634l10 -6l5 9M1268 648l9 15M1285 646l3 5l6 -3M1294 643l9 -5l6 11M1284 659l20 -12M1297 629l19 -11l6 10M1289 623l10 17M1295 659l9 15l9 -5M1281 655l3 5l9 -5M1288 688l-3 15l11 2M1277 689l23 4M1267 665l-3 17M1274 694l9 2M1283 669l10 2M1279 661l-1 6M1288 668l-3 18M1276 688l-2 12l5 1M1301 670l5 1l-1 5M1292 670l-2 12M1273 673l-2 12M1267 689l-1 7l7 1M1284 680l-2 14l9 2M1298 679l-3 19l9 2M1300 674l-3 19l4 1M1277 686l-4 21M1292 676l-3 19M1304 684l16 3M1296 699l13 2M1288 664l18 3M1298 663l-4 23M1278 687l19 3l-2 12M1338 359l3 16l5 -1M1350 341l18 -4M1348 345l3 13l11 -2M1331 355l12 -3M1353 374l1 7l7 -1M1344 366l8 -2M1351 362l11 -2M1335 364l3 14M1325 356l15 -3M1328 361l3 14l7 -2M1346 371l1 5M1311 372l2 10M1334 365l3 16l11 -2M1329 374l18 -4M1331 356l5 -1l2 9M1344 340l5 23l8 -2M1328 351l5 23M1351 366l7 -2l2 9M1346 369l9 -2l1 6M1316 384l-6 10l7 4M1324 384l-4 6l7 4M1344 389l10 5M1347 399l-4 6M1350 409l12 7l-3 5M1339 411l20 11l-5 8M1345 410l7 4M1328 404l-3 5l9 5M1313 409l9 5l-6 11M1337 380l-3 5l7 4M1351 418l20 12l-6 10M1344 389l-11 19M1345 382l-3 5l6 4M1343 404l10 6l-6 11M1316 398l-7 12M1346 398l9 5M1316 443l6 -0l1 11M1344 437l16 -1M1347 432l23 -2M1321 435l12 -1l1 9M1323 426l1 11l5 -0M1341 453l1 16l10 -1M1323 434l2 22l7 -1M1311 456l21 -2M1341 428l2 21M1312 456l2 23l12 -1M1322 440l1 7l13 -1M1312 453l1 17l5 -0M1343 422l6 -1l1 8M1315 480l7 -4M1312 465l21 -12M1311 470l4 7l4 -3M1351 490l7 12M1342 495l4 7l10 -6M1354 487l15 -9M1339 500l20 -12l2 4M1344 462l12 -7M1320 465l10 -6M1320 493l5 -3l6 11M1353 464l8 13M1328 498l3 5l11 -6M1352 494l11 -7M1333 476l6 10l6 -3M1322 477l7 11l11 -6M1321 540l-8 14l6 3M1330 524l-5 9l8 4M1341 537l18 10M1339 510l-3 4l8 4M1322 539l19 11M1315 515l-6 11M1321 506l8 5l-4 7M1325 520l15 8l-2 4M1336 507l8 5M1332 521l14 8l-5 9M1336 516l16 9l-2 4M1326 527l-7 13l8 5M1335 518l15 8M1349 568l-0 10M1315 565l-0 7M1337 548l9 0l-0 12M1312 546l7 0M1331 557l-0 11M1319 575l-0 8M1324 557l21 0l-0 10M1343 576l-0 24M1346 542l12 0l-0 11M1319 567l24 0M1319 547l-0 22l11 0M1331 557l-0 6M1315 550l20 0M1322 581l2 9l11 -3M1353 612l19 -5l3 12M1341 609l4 14M1331 606l8 -2l2 9M1326 603l23 -6M1319 594l7 -2M1343 597l2 9M1323 606l2 8M1319 602l6 21l6 -2M1341 607l6 23M1344 611l23 -6l3 12M1349 584l2 7M1354 600l2 6l7 -2M1319 598l19 -5M1336 595l22 -6l2 7M1318 588l21 -6l2 8M1346 583l6 23l7 -2M1326 595l7 -2l2 7M1317 634l8 0M1329 647l-0 21l6 0M1319 633l-0 8l5 0M1341 658l9 0M1321 625l-0 22M1348 639l15 0l-0 7M1344 633l7 0l-0 10M1348 653l-0 24M1340 642l-0 5l8 0M1330 636l23 0l-0 6M1342 640l20 0M1335 637l-0 14l13 0M1311 659l-0 24l8 0M1313 622l7 0l-0 11M1319 671l-10 17l10 6M1336 679l-6 11M1316 697l-11 18M1348 684l16 9l-6 11M1352 689l16 9M1346 673l10 6l-6 11M1347 679l-11 20l7 4M1347 685l7 4M1334 669l8 5M1345 692l16 9l-5 9M1338 693l17 10M1353 662l-8 15l9 5M1328 666l-10 16l10 6M1348 682l19 11l-4 7M1331 666l-3 6l8 4M1325 676l-6 10l4 3M1362 364l3 12l7 -2M1397 360l2 12M1392 357l4 20l7 -1M1396 356l6 -1M1364 363l7 -1M1358 363l9 -2M1356 358l3 15M1395 375l4 21l6 -1M1359 343l3 13M1390 348l7 -2M1368 370l19 -4l2 8M1394 376l4 19M1356 368l5 -1l1 7M1389 368l2 9l9 -2M1392 345l17 -4M1356 370l16 -3l1 5M1372 355l11 -2l1 7M1385 355l5 -1l2 7M1379 402l14 -4l3 10M1360 393l12 -3M1361 384l22 -6l1 5M1398 420l2 7l5 -1M1386 396l2 7l8 -2M1371 385l9 -2l1 5M1361 406l18 -5M1361 416l6 -2M1364 386l8 -2M1383 400l6 22M1367 396l3 11l12 -3M1368 393l20 -5M1392 419l1 5M1400 409l12 -3l2 7M1377 405l2 6M1397 388l6 -2l2 8M1391 402l6 23l10 -3M1382 429l-0 8M1394 430l12 0l-0 7M1377 425l15 0M1372 421l-0 16M1384 429l11 0M1380 437l-0 20l5 0M1363 435l11 0l-0 9M1375 442l-0 23l7 0M1387 432l-0 9l9 0M1389 431l5 0l-0 10M1358 424l-0 19M1358 432l-0 11l12 0M1381 422l12 0M1358 448l-0 10l4 0M1385 426l-0 7M1391 453l19 0M1365 455l-0 22l12 0M1371 467l-6 15M1361 460l-8 22l10 4M1389 461l-3 7M1396 471l-3 8M1372 476l-4 11M1357 485l22 8l-2 5M1390 492l5 2M1368 487l-7 19l11 4M1366 483l9 3l-1 4M1382 492l-4 11l8 3M1393 483l11 4M1394 476l22 8l-2 6M1386 484l18 6M1383 494l18 7l-3 8M1367 488l-6 16M1392 484l8 3M1364 478l-4 11M1398 485l17 6l-2 4M1387 485l22 8l-3 9M1397 491l14 5l-3 7M1358 539l-0 19l8 0M1398 512l8 0M1370 532l18 0M1381 517l-0 10l6 0M1385 528l21 0M1394 507l-0 9M1388 524l7 0l-0 5M1365 503l-0 9l6 0M1360 535l-0 21M1356 503l11 0l-0 4M1362 521l14 0M1372 509l18 0M1382 504l-0 18M1381 524l7 0l-0 9M1384 539l-0 19l8 0M1368 538l10 0M1363 530l19 0M1388 509l-0 9M1364 537l9 0l-0 8M1377 543l11 -2l2 10M1392 556l21 -5l1 4M1356 568l2 10M1395 574l5 23l5 -1M1369 544l16 -3M1392 571l15 -3M1370 549l11 -2M1381 542l5 23M1389 572l1 5M1373 555l4 19M1377 552l11 -2l2 10M1355 567l4 19M1391 568l14 -3M1370 573l1 7l6 -1M1393 568l2 11l9 -2M1374 570l22 -5l1 5M1389 547l6 -1M1377 549l11 -2M1358 559l20 -4l2 7M1383 541l17 -4l1 6M1395 593l8 1M1383 596l9 2M1371 613l10 2l-2 11M1358 587l-2 10l5 1M1368 588l21 4M1367 607l-2 11l11 2M1373 590l-4 21l12 2M1396 603l-2 12M1391 601l-1 6M1378 611l16 3l-1 8M1384 583l-4 22l5 1M1370 619l13 2l-1 5M1364 616l-2 9M1368 590l-3 16M1371 593l-2 9l6 1M1358 619l-2 11M1399 581l17 3M1386 645l10 -1l2 12M1363 625l23 -3M1393 628l3 22M1393 646l18 -2M1367 650l19 -3l1 11M1373 634l2 12M1360 643l12 -2l2 12M1388 660l7 -1M1399 622l1 9l7 -1M1367 620l2 13l9 -1M1377 659l2 12M1356 658l15 -2l1 9M1370 650l7 -1M1373 633l18 -3M1377 623l8 -1l1 7M1384 641l12 -2l1 7M1356 633l2 17l10 -1M1394 622l6 -1l1 5M1384 632l19 -3M1368 655l16 -2M1358 689l7 -1l2 11M1377 680l3 15l6 -1M1397 674l2 9M1361 671l17 -4l1 6M1360 670l15 -3M1373 694l6 -1l3 12M1390 700l2 9l10 -2M1387 667l1 6M1384 697l9 -2M1364 668l20 -4l2 9M1382 667l22 -5l2 10M1357 679l2 10l6 -1M1397 689l3 15l8 -2M1386 664l15 -3l2 9M1400 699l20 -4"/>
</g>
<polyline points="712,433 745,408 790,368 812,352 840,345 880,343 940,341" fill="none" stroke="#dddfe3" stroke-width="4.6" stroke-linejoin="round" stroke-linecap="round" />
<polyline points="940,341 1010,340" fill="none" stroke="#dcdfe3" stroke-width="3" stroke-linejoin="round" stroke-linecap="round" />
<polyline points="1200,340 1290,372 1330,420 1360,470 1390,520" fill="none" stroke="#dfe2e6" stroke-width="2.5" stroke-linejoin="round" stroke-linecap="round" />
<polyline points="190,340 199,375 211,429 220,450 230.5,486 238,520 247,528 259,546 263.5,570 262,600 259,630 256,660 251.5,696" fill="none" stroke="#fff" stroke-width="2.2" stroke-linejoin="round" stroke-linecap="round" />
<polyline points="316,480 346,448.5 367,445.5 406,442.5 430,436.5 490,432 517,439.5 545,452" fill="none" stroke="#fff" stroke-width="2" stroke-linejoin="round" stroke-linecap="round" />
<polyline points="346,448.5 330,470 318,500" fill="none" stroke="#fff" stroke-width="1.6" stroke-linejoin="round" stroke-linecap="round" />
<polyline points="394,340 400,390 409,450 415,486 421,520 430,560" fill="none" stroke="#fff" stroke-width="2" stroke-linejoin="round" stroke-linecap="round" />
<polyline points="430,340 433,390 436,438 442,486 445,520 452,550 476,590 484,588" fill="none" stroke="#fff" stroke-width="2.2" stroke-linejoin="round" stroke-linecap="round" />
<polyline points="479.5,340 484,382.5 490,432 499,486 505,520" fill="none" stroke="#fff" stroke-width="2" stroke-linejoin="round" stroke-linecap="round" />
<polyline points="400,388.5 440,386 484,382.5 530,378" fill="none" stroke="#fff" stroke-width="2" stroke-linejoin="round" stroke-linecap="round" />
<polyline points="505,486 517,457 535,399 547,375 554,352 556,340" fill="none" stroke="#fff" stroke-width="2.4" stroke-linejoin="round" stroke-linecap="round" />
<polyline points="536.5,410 540,450 543,490 546,530 541,537" fill="none" stroke="#fff" stroke-width="2" stroke-linejoin="round" stroke-linecap="round" />
<polyline points="337,558 349,600 355,615 364,645 374.5,669 445,658.5 449.5,654" fill="none" stroke="#fff" stroke-width="2.2" stroke-linejoin="round" stroke-linecap="round" />
<polyline points="449.5,654 452,690 452,696" fill="none" stroke="#fff" stroke-width="2" stroke-linejoin="round" stroke-linecap="round" />
<polyline points="449.5,654 466,620 478,594 484,588 499,576 520,556 541,537 560,524 600,512" fill="none" stroke="#fff" stroke-width="2.4" stroke-linejoin="round" stroke-linecap="round" />
<polyline points="484,588 510,600 548,622 560,630" fill="none" stroke="#fff" stroke-width="1.8" stroke-linejoin="round" stroke-linecap="round" />
<polyline points="445,520 470,540 499,576" fill="none" stroke="#fff" stroke-width="1.8" stroke-linejoin="round" stroke-linecap="round" />
<polyline points="554,375 590,366 626,357 668,345 690,340" fill="none" stroke="#fff" stroke-width="2.4" stroke-linejoin="round" stroke-linecap="round" />
<polyline points="552,371 540,392 520,420" fill="none" stroke="#fff" stroke-width="1.8" stroke-linejoin="round" stroke-linecap="round" />
<polyline points="545,486 600,470 680,450 716,432 745,420" fill="none" stroke="#fff" stroke-width="2.4" stroke-linejoin="round" stroke-linecap="round" />
<polyline points="545,497 600,482 660,466 720,452" fill="none" stroke="#fff" stroke-width="1.8" stroke-linejoin="round" stroke-linecap="round" />
<polyline points="632,390 641,420 650,450 660,480 668,505" fill="none" stroke="#fff" stroke-width="2.2" stroke-linejoin="round" stroke-linecap="round" />
<polyline points="596,340 610,390 626,440 640,490" fill="none" stroke="#fff" stroke-width="1.6" stroke-linejoin="round" stroke-linecap="round" />
<polyline points="663,345 676,390 690,440 700,480" fill="none" stroke="#fff" stroke-width="2" stroke-linejoin="round" stroke-linecap="round" />
<polyline points="560,340 575,395 590,440 604,490 612,520" fill="none" stroke="#fff" stroke-width="2.2" stroke-linejoin="round" stroke-linecap="round" />
<polyline points="716,432 770,369 800,348 830,342" fill="none" stroke="#fff" stroke-width="2.4" stroke-linejoin="round" stroke-linecap="round" />
<polyline points="700,420 740,408 800,392 870,372 905,360" fill="none" stroke="#fff" stroke-width="1.8" stroke-linejoin="round" stroke-linecap="round" />
<polyline points="803,369 812,410 824,456" fill="none" stroke="#fff" stroke-width="2" stroke-linejoin="round" stroke-linecap="round" />
<polyline points="745,420 815,456 860,450 905,442 936,440.7" fill="none" stroke="#fff" stroke-width="2.6" stroke-linejoin="round" stroke-linecap="round" />
<polyline points="720,452 780,470 815,456" fill="none" stroke="#fff" stroke-width="2" stroke-linejoin="round" stroke-linecap="round" />
<polyline points="668,505 700,497 745,486 790,476 826,468 870,462 905,460" fill="none" stroke="#fff" stroke-width="2.2" stroke-linejoin="round" stroke-linecap="round" />
<polyline points="600,512 640,530 622,570 612,600 606,640 606,696" fill="none" stroke="#fff" stroke-width="2" stroke-linejoin="round" stroke-linecap="round" />
<polyline points="640,530 680,512 720,500" fill="none" stroke="#fff" stroke-width="2" stroke-linejoin="round" stroke-linecap="round" />
<polyline points="900,358.6 921,351 993,348 1057,346 1100,340.7 1110,340" fill="none" stroke="#fff" stroke-width="2.8" stroke-linejoin="round" stroke-linecap="round" />
<polyline points="830,342 870,352 900,358.6" fill="none" stroke="#fff" stroke-width="2.4" stroke-linejoin="round" stroke-linecap="round" />
<polyline points="916,376.4 925,410 932,440.7 934,470" fill="none" stroke="#fff" stroke-width="2.2" stroke-linejoin="round" stroke-linecap="round" />
<polyline points="905,372 921,351" fill="none" stroke="#fff" stroke-width="2" stroke-linejoin="round" stroke-linecap="round" />
<polyline points="921,351 950,378 990,352 1011,350" fill="none" stroke="#fff" stroke-width="1.6" stroke-linejoin="round" stroke-linecap="round" />
<polyline points="936,440.7 1003.6,455 1057,458.6 1107,465 1146,466.8 1185.7,471 1221,480 1239,498 1257,513 1278.6,524.3 1310.7,535 1328.6,544 1346,556.4 1360.7,574.3 1375,603 1385.7,631.4 1390,650" fill="none" stroke="#fff" stroke-width="3" stroke-linejoin="round" stroke-linecap="round" />
<polyline points="1137,363.6 1140,385 1157,401.4 1162.5,437 1150,466.8" fill="none" stroke="#fff" stroke-width="1.5" stroke-linejoin="round" stroke-linecap="round" />
<polyline points="1322,517.5 1331,504 1339,500.5 1388.6,466.4 1390,465" fill="none" stroke="#fff" stroke-width="1.8" stroke-linejoin="round" stroke-linecap="round" />
<polyline points="1331,503 1372,502" fill="none" stroke="#fff" stroke-width="1.6" stroke-linejoin="round" stroke-linecap="round" />
<polyline points="1299,535 1296,560 1300,590" fill="none" stroke="#fff" stroke-width="1.6" stroke-linejoin="round" stroke-linecap="round" />
<polyline points="281.5,340 283,375 292,411 302.5,441 310,465 313,486 317.5,510 328,534 337,555 346,585 352,612 352,645 353.5,696" fill="none" stroke="#e9ab48" stroke-width="4.6" stroke-linejoin="round" stroke-linecap="round" />
<polyline points="281.5,340 283,375 292,411 302.5,441 310,465 313,486 317.5,510 328,534 337,555 346,585 352,612 352,645 353.5,696" fill="none" stroke="#fbd377" stroke-width="3.2" stroke-linejoin="round" stroke-linecap="round" />
<polyline points="606,640 603,660 604,680 608,696" fill="none" stroke="#e9ab48" stroke-width="4.2" stroke-linejoin="round" stroke-linecap="round" />
<polyline points="606,640 603,660 604,680 608,696" fill="none" stroke="#fbd377" stroke-width="2.8" stroke-linejoin="round" stroke-linecap="round" />
<polygon points="628.7,700 624,667.5 622.5,650 624,640 627,633 629,620 630,600 633.4,586 638,573.7 650.6,561 666,550 685,539 703.7,531.5 722.5,523.7 747.5,514 760,509.7 770,507 772,518 784,522 799,528 807,503.7 812,502.5 817,508.5 818,520.7 820.7,528 823,520.7 826.8,503.7 832.8,496.4 862,494 864.4,486.7 871.7,484.3 908,483.8 917.8,485.5 921.5,490.4 949.4,488 954,490.4 961.5,503.7 966.4,505 973.7,498.9 983.4,495.2 993,490.4 1002.8,488 1027,490.4 1049,495.2 1053.8,501.3 1068.4,502.5 1075.7,509.8 1092.9,522.5 1121.4,531.4 1167.9,547.5 1175,542 1180,541.7 1189,536.6 1192.8,541.7 1208,544.3 1212,553 1241.4,584 1254,572.4 1260.6,577.6 1261.9,584 1292.6,596.7 1313,607 1315.6,612 1328.4,622.3 1338.6,627.4 1343.7,633.8 1356.5,645.4 1371.9,663 1373,667 1360.4,677.3 1378.3,681.2 1368,697 1366,700" fill="#9cc0f9" />
<polygon points="209.5,340 247,340 245.5,363 247,405 239.5,415.5 229,408 224.5,390 218.5,375 215.5,357" fill="#9cc0f9" />
<polygon points="436,357 444,357 445,379 438,379.5" fill="#9cc0f9" />
<polygon points="374.5,511.5 381,509 385,520 375,520" fill="#9cc0f9" />
<polygon points="359.5,519 376,513 388,522 400,546 404.5,564 403,577.5 397,580.5 382,573 373,567 367,546 361,528" fill="#9cc0f9" />
<polygon points="248.5,567 262,567 262,600 271,618 271,642 262,642 259,636 250,630 247,615" fill="#9cc0f9" />
<polygon points="271,633 286,630 289,642 287.5,666 292,696 272.5,696 271,672 272.5,651" fill="#9cc0f9" />
<polygon points="248.5,642 256,642 263.5,666 265,675 256,676.5 250,666" fill="#9cc0f9" />
<polygon points="265,537 269.5,538.5 271.6,549 268,550.5" fill="#9cc0f9" />
<polygon points="484,629 489,627 491,632 486,634" fill="#a9c6f5" />
<polyline points="238,520 247,528 259,546 263.5,570 262,600 259,630 256,660 251.5,696" fill="none" stroke="#fff" stroke-width="2.2" stroke-linejoin="round" stroke-linecap="round" />
<polygon points="628,633 640,628 646,640 640,656 628,652" fill="#dfe6e4" />
<polygon points="630,663 645,664 645,669 630,668" fill="#dfe4ea" />
<polygon points="760,509.7 770,507 790,505 805,503 799,528 784,522 772,518" fill="#e8eaed" />
<polyline points="1083,514 1121.4,531.4 1165.7,546" fill="none" stroke="#f7e2a6" stroke-width="1.3" stroke-linejoin="round" stroke-linecap="round" />
<polyline points="714.5,532 728,565" fill="none" stroke="#eef1f6" stroke-width="1.6" stroke-linejoin="round" stroke-linecap="round" />
<circle cx="728.300" cy="565.500" r="1.8" fill="#eef1f6"/>
<polyline points="631,594.5 651,597.5" fill="none" stroke="#eef1f6" stroke-width="1.4" stroke-linejoin="round" stroke-linecap="round" />
<ellipse cx="651.500" cy="598" rx="1.700" ry="2.600" fill="#eef1f6"/>
<polyline points="823,511 835,509" fill="none" stroke="#eef1f6" stroke-width="1.4" stroke-linejoin="round" stroke-linecap="round" />
<polyline points="871,486 871.5,495" fill="none" stroke="#eef1f6" stroke-width="1.4" stroke-linejoin="round" stroke-linecap="round" />
<polyline points="910,484 910.5,492" fill="none" stroke="#eef1f6" stroke-width="1.3" stroke-linejoin="round" stroke-linecap="round" />
<polyline points="920,490 922,503" fill="none" stroke="#eef1f6" stroke-width="1.3" stroke-linejoin="round" stroke-linecap="round" />
<polyline points="929,489 931,500" fill="none" stroke="#eef1f6" stroke-width="1.2" stroke-linejoin="round" stroke-linecap="round" />
<polyline points="937,489 937.5,500" fill="none" stroke="#eef1f6" stroke-width="1.2" stroke-linejoin="round" stroke-linecap="round" />
<polyline points="1261.9,585 1250.4,600.6 1269.5,613.4 1270.8,617" fill="none" stroke="#eef1f6" stroke-width="1.9" stroke-linejoin="round" stroke-linecap="round" />
<polyline points="1311.7,608.3 1295,633.8 1279.8,630.5" fill="none" stroke="#eef1f6" stroke-width="1.9" stroke-linejoin="round" stroke-linecap="round" />
<polyline points="1342.4,635 1325.8,654.3 1329.7,669.7" fill="none" stroke="#eef1f6" stroke-width="1.7" stroke-linejoin="round" stroke-linecap="round" />
<polyline points="1356.5,646.6 1341.2,667 1343.7,677.3" fill="none" stroke="#eef1f6" stroke-width="1.7" stroke-linejoin="round" stroke-linecap="round" />
<polyline points="1352.7,671 1359,677" fill="none" stroke="#eef1f6" stroke-width="1.4" stroke-linejoin="round" stroke-linecap="round" />
<polyline points="1326,623 1331,621" fill="none" stroke="#eef1f6" stroke-width="1.4" stroke-linejoin="round" stroke-linecap="round" />
<polyline points="660,690 680,680 690,683 686,690" fill="none" stroke="#e4ece6" stroke-width="2.6" stroke-linejoin="round" stroke-linecap="round" />
<polyline points="818,530 820,560 835,590 860,610 900,612 935,628 980,660 1020,696" fill="none" stroke="#8fb5f0" stroke-width="0.5" stroke-linejoin="round" stroke-linecap="round" stroke-dasharray="2 1.500"/>
<polyline points="655,600 700,615 760,618 800,625 850,660 880,696" fill="none" stroke="#8fb5f0" stroke-width="0.5" stroke-linejoin="round" stroke-linecap="round" stroke-dasharray="2 1.500"/>
<polyline points="900,580 960,640 1000,680 1030,696" fill="none" stroke="#8fb5f0" stroke-width="0.5" stroke-linejoin="round" stroke-linecap="round" stroke-dasharray="2 1.500"/>
<rect x="540.3" y="345" width="15" height="5.7" rx=".8" fill="#6aa546"/>
<text x="547.8" y="349.4" font-size="4.2" font-weight="bold" fill="#eef5e6" text-anchor="middle">E119</text>
<rect x="574.7" y="430" width="15.5" height="5.7" rx=".8" fill="#6aa546"/>
<text x="582.45" y="434.4" font-size="4.2" font-weight="bold" fill="#eef5e6" text-anchor="middle">E119</text>
<rect x="586" y="460.8" width="15.3" height="5.7" rx=".8" fill="#6aa546"/>
<text x="593.65" y="465.2" font-size="4.2" font-weight="bold" fill="#eef5e6" text-anchor="middle">E119</text>
<rect x="327.5" y="543" width="10" height="6" rx=".8" fill="#4a7fcb"/>
<text x="332.5" y="547.7" font-size="4.4" font-weight="bold" fill="#eef5e6" text-anchor="middle">M3</text>
<rect x="286.3" y="347.7" width="7.4" height="7.4" rx="1.7" fill="#1b72e6"/>
<rect x="288.2" y="349.3" width="3.6" height="4" rx=".8" fill="#eef4fe"/>
<rect x="288.7" y="351.3" width="2.6" height="1" fill="#1b72e6"/>
<rect x="410.3" y="384.3" width="7.4" height="7.4" rx="1.7" fill="#1b72e6"/>
<rect x="412.2" y="385.9" width="3.6" height="4" rx=".8" fill="#eef4fe"/>
<rect x="412.7" y="387.9" width="2.6" height="1" fill="#1b72e6"/>
<rect x="429.3" y="389.7" width="7.4" height="7.4" rx="1.7" fill="#1b72e6"/>
<rect x="431.2" y="391.3" width="3.6" height="4" rx=".8" fill="#eef4fe"/>
<rect x="431.7" y="393.3" width="2.6" height="1" fill="#1b72e6"/>
<rect x="439.3" y="382.2" width="7.4" height="7.4" rx="1.7" fill="#1b72e6"/>
<rect x="441.2" y="383.8" width="3.6" height="4" rx=".8" fill="#eef4fe"/>
<rect x="441.7" y="385.8" width="2.6" height="1" fill="#1b72e6"/>
<rect x="361.8" y="443.7" width="7.4" height="7.4" rx="1.7" fill="#1b72e6"/>
<rect x="363.7" y="445.3" width="3.6" height="4" rx=".8" fill="#eef4fe"/>
<rect x="364.2" y="447.3" width="2.6" height="1" fill="#1b72e6"/>
<rect x="402.6" y="448.7" width="7.4" height="7.4" rx="1.7" fill="#1b72e6"/>
<rect x="404.5" y="450.3" width="3.6" height="4" rx=".8" fill="#eef4fe"/>
<rect x="405" y="452.3" width="2.6" height="1" fill="#1b72e6"/>
<rect x="342.9" y="463.7" width="7.4" height="7.4" rx="1.7" fill="#1b72e6"/>
<rect x="344.8" y="465.3" width="3.6" height="4" rx=".8" fill="#eef4fe"/>
<rect x="345.3" y="467.3" width="2.6" height="1" fill="#1b72e6"/>
<rect x="224.7" y="463.2" width="7.4" height="7.4" rx="1.7" fill="#1b72e6"/>
<rect x="226.6" y="464.8" width="3.6" height="4" rx=".8" fill="#eef4fe"/>
<rect x="227.1" y="466.8" width="2.6" height="1" fill="#1b72e6"/>
<rect x="481.3" y="469.2" width="7.4" height="7.4" rx="1.7" fill="#1b72e6"/>
<rect x="483.2" y="470.8" width="3.6" height="4" rx=".8" fill="#eef4fe"/>
<rect x="483.7" y="472.8" width="2.6" height="1" fill="#1b72e6"/>
<rect x="567.9" y="391.7" width="7.4" height="7.4" rx="1.7" fill="#1b72e6"/>
<rect x="569.8" y="393.3" width="3.6" height="4" rx=".8" fill="#eef4fe"/>
<rect x="570.3" y="395.3" width="2.6" height="1" fill="#1b72e6"/>
<rect x="335.3" y="577.7" width="7.4" height="7.4" rx="1.7" fill="#1b72e6"/>
<rect x="337.2" y="579.3" width="3.6" height="4" rx=".8" fill="#eef4fe"/>
<rect x="337.7" y="581.3" width="2.6" height="1" fill="#1b72e6"/>
<rect x="349.3" y="610.2" width="7.4" height="7.4" rx="1.7" fill="#1b72e6"/>
<rect x="351.2" y="611.8" width="3.6" height="4" rx=".8" fill="#eef4fe"/>
<rect x="351.7" y="613.8" width="2.6" height="1" fill="#1b72e6"/>
<rect x="442.8" y="643.5" width="7.4" height="7.4" rx="1.7" fill="#1b72e6"/>
<rect x="444.7" y="645.1" width="3.6" height="4" rx=".8" fill="#eef4fe"/>
<rect x="445.2" y="647.1" width="2.6" height="1" fill="#1b72e6"/>
<rect x="446.7" y="665.7" width="7.4" height="7.4" rx="1.7" fill="#1b72e6"/>
<rect x="448.6" y="667.3" width="3.6" height="4" rx=".8" fill="#eef4fe"/>
<rect x="449.1" y="669.3" width="2.6" height="1" fill="#1b72e6"/>
<rect x="499.8" y="656.7" width="7.4" height="7.4" rx="1.7" fill="#1b72e6"/>
<rect x="501.7" y="658.3" width="3.6" height="4" rx=".8" fill="#eef4fe"/>
<rect x="502.2" y="660.3" width="2.6" height="1" fill="#1b72e6"/>
<rect x="514.8" y="649.7" width="7.4" height="7.4" rx="1.7" fill="#1b72e6"/>
<rect x="516.7" y="651.3" width="3.6" height="4" rx=".8" fill="#eef4fe"/>
<rect x="517.2" y="653.3" width="2.6" height="1" fill="#1b72e6"/>
<rect x="532.3" y="627.7" width="7.4" height="7.4" rx="1.7" fill="#1b72e6"/>
<rect x="534.2" y="629.3" width="3.6" height="4" rx=".8" fill="#eef4fe"/>
<rect x="534.7" y="631.3" width="2.6" height="1" fill="#1b72e6"/>
<rect x="550.8" y="623.7" width="7.4" height="7.4" rx="1.7" fill="#1b72e6"/>
<rect x="552.7" y="625.3" width="3.6" height="4" rx=".8" fill="#eef4fe"/>
<rect x="553.2" y="627.3" width="2.6" height="1" fill="#1b72e6"/>
<rect x="536.7" y="532.5" width="7.4" height="7.4" rx="1.7" fill="#1b72e6"/>
<rect x="538.6" y="534.1" width="3.6" height="4" rx=".8" fill="#eef4fe"/>
<rect x="539.1" y="536.1" width="2.6" height="1" fill="#1b72e6"/>
<rect x="552.9" y="550.7" width="7.4" height="7.4" rx="1.7" fill="#1b72e6"/>
<rect x="554.8" y="552.3" width="3.6" height="4" rx=".8" fill="#eef4fe"/>
<rect x="555.3" y="554.3" width="2.6" height="1" fill="#1b72e6"/>
<rect x="575.3" y="539.1" width="7.4" height="7.4" rx="1.7" fill="#1b72e6"/>
<rect x="577.2" y="540.7" width="3.6" height="4" rx=".8" fill="#eef4fe"/>
<rect x="577.7" y="542.7" width="2.6" height="1" fill="#1b72e6"/>
<rect x="572.3" y="338.7" width="7.4" height="7.4" rx="1.7" fill="#1b72e6"/>
<rect x="574.2" y="340.3" width="3.6" height="4" rx=".8" fill="#eef4fe"/>
<rect x="574.7" y="342.3" width="2.6" height="1" fill="#1b72e6"/>
<rect x="661.9" y="347.7" width="7.4" height="7.4" rx="1.7" fill="#1b72e6"/>
<rect x="663.8" y="349.3" width="3.6" height="4" rx=".8" fill="#eef4fe"/>
<rect x="664.3" y="351.3" width="2.6" height="1" fill="#1b72e6"/>
<rect x="751" y="338.2" width="7.4" height="7.4" rx="1.7" fill="#1b72e6"/>
<rect x="752.9" y="339.8" width="3.6" height="4" rx=".8" fill="#eef4fe"/>
<rect x="753.4" y="341.8" width="2.6" height="1" fill="#1b72e6"/>
<rect x="900.1" y="349.5" width="7.4" height="7.4" rx="1.7" fill="#1b72e6"/>
<rect x="902" y="351.1" width="3.6" height="4" rx=".8" fill="#eef4fe"/>
<rect x="902.5" y="353.1" width="2.6" height="1" fill="#1b72e6"/>
<rect x="629.5" y="383.7" width="7.4" height="7.4" rx="1.7" fill="#1b72e6"/>
<rect x="631.4" y="385.3" width="3.6" height="4" rx=".8" fill="#eef4fe"/>
<rect x="631.9" y="387.3" width="2.6" height="1" fill="#1b72e6"/>
<rect x="714.3" y="425.7" width="7.4" height="7.4" rx="1.7" fill="#1b72e6"/>
<rect x="716.2" y="427.3" width="3.6" height="4" rx=".8" fill="#eef4fe"/>
<rect x="716.7" y="429.3" width="2.6" height="1" fill="#1b72e6"/>
<rect x="718.3" y="439.2" width="7.4" height="7.4" rx="1.7" fill="#1b72e6"/>
<rect x="720.2" y="440.8" width="3.6" height="4" rx=".8" fill="#eef4fe"/>
<rect x="720.7" y="442.8" width="2.6" height="1" fill="#1b72e6"/>
<rect x="728.8" y="444.7" width="7.4" height="7.4" rx="1.7" fill="#1b72e6"/>
<rect x="730.7" y="446.3" width="3.6" height="4" rx=".8" fill="#eef4fe"/>
<rect x="731.2" y="448.3" width="2.6" height="1" fill="#1b72e6"/>
<rect x="775.6" y="434.1" width="7.4" height="7.4" rx="1.7" fill="#1b72e6"/>
<rect x="777.5" y="435.7" width="3.6" height="4" rx=".8" fill="#eef4fe"/>
<rect x="778" y="437.7" width="2.6" height="1" fill="#1b72e6"/>
<rect x="831.3" y="415.5" width="7.4" height="7.4" rx="1.7" fill="#1b72e6"/>
<rect x="833.2" y="417.1" width="3.6" height="4" rx=".8" fill="#eef4fe"/>
<rect x="833.7" y="419.1" width="2.6" height="1" fill="#1b72e6"/>
<rect x="888.7" y="425.7" width="7.4" height="7.4" rx="1.7" fill="#1b72e6"/>
<rect x="890.6" y="427.3" width="3.6" height="4" rx=".8" fill="#eef4fe"/>
<rect x="891.1" y="429.3" width="2.6" height="1" fill="#1b72e6"/>
<rect x="817" y="444.7" width="7.4" height="7.4" rx="1.7" fill="#1b72e6"/>
<rect x="818.9" y="446.3" width="3.6" height="4" rx=".8" fill="#eef4fe"/>
<rect x="819.4" y="448.3" width="2.6" height="1" fill="#1b72e6"/>
<rect x="868.9" y="444" width="7.4" height="7.4" rx="1.7" fill="#1b72e6"/>
<rect x="870.8" y="445.6" width="3.6" height="4" rx=".8" fill="#eef4fe"/>
<rect x="871.3" y="447.6" width="2.6" height="1" fill="#1b72e6"/>
<rect x="911.3" y="444" width="7.4" height="7.4" rx="1.7" fill="#1b72e6"/>
<rect x="913.2" y="445.6" width="3.6" height="4" rx=".8" fill="#eef4fe"/>
<rect x="913.7" y="447.6" width="2.6" height="1" fill="#1b72e6"/>
<rect x="740.8" y="477" width="7.4" height="7.4" rx="1.7" fill="#1b72e6"/>
<rect x="742.7" y="478.6" width="3.6" height="4" rx=".8" fill="#eef4fe"/>
<rect x="743.2" y="480.6" width="2.6" height="1" fill="#1b72e6"/>
<rect x="774.3" y="474" width="7.4" height="7.4" rx="1.7" fill="#1b72e6"/>
<rect x="776.2" y="475.6" width="3.6" height="4" rx=".8" fill="#eef4fe"/>
<rect x="776.7" y="477.6" width="2.6" height="1" fill="#1b72e6"/>
<rect x="601" y="504.9" width="7.4" height="7.4" rx="1.7" fill="#1b72e6"/>
<rect x="602.9" y="506.5" width="3.6" height="4" rx=".8" fill="#eef4fe"/>
<rect x="603.4" y="508.5" width="2.6" height="1" fill="#1b72e6"/>
<rect x="604.3" y="526.2" width="7.4" height="7.4" rx="1.7" fill="#1b72e6"/>
<rect x="606.2" y="527.8" width="3.6" height="4" rx=".8" fill="#eef4fe"/>
<rect x="606.7" y="529.8" width="2.6" height="1" fill="#1b72e6"/>
<rect x="607.3" y="586.2" width="7.4" height="7.4" rx="1.7" fill="#1b72e6"/>
<rect x="609.2" y="587.8" width="3.6" height="4" rx=".8" fill="#eef4fe"/>
<rect x="609.7" y="589.8" width="2.6" height="1" fill="#1b72e6"/>
<rect x="612.7" y="595.2" width="7.4" height="7.4" rx="1.7" fill="#1b72e6"/>
<rect x="614.6" y="596.8" width="3.6" height="4" rx=".8" fill="#eef4fe"/>
<rect x="615.1" y="598.8" width="2.6" height="1" fill="#1b72e6"/>
<rect x="598.3" y="609.7" width="7.4" height="7.4" rx="1.7" fill="#1b72e6"/>
<rect x="600.2" y="611.3" width="3.6" height="4" rx=".8" fill="#eef4fe"/>
<rect x="600.7" y="613.3" width="2.6" height="1" fill="#1b72e6"/>
<rect x="606.7" y="623.7" width="7.4" height="7.4" rx="1.7" fill="#1b72e6"/>
<rect x="608.6" y="625.3" width="3.6" height="4" rx=".8" fill="#eef4fe"/>
<rect x="609.1" y="627.3" width="2.6" height="1" fill="#1b72e6"/>
<rect x="601.9" y="664.2" width="7.4" height="7.4" rx="1.7" fill="#1b72e6"/>
<rect x="603.8" y="665.8" width="3.6" height="4" rx=".8" fill="#eef4fe"/>
<rect x="604.3" y="667.8" width="2.6" height="1" fill="#1b72e6"/>
<rect x="608.8" y="673.7" width="7.4" height="7.4" rx="1.7" fill="#1b72e6"/>
<rect x="610.7" y="675.3" width="3.6" height="4" rx=".8" fill="#eef4fe"/>
<rect x="611.2" y="677.3" width="2.6" height="1" fill="#1b72e6"/>
<rect x="932" y="352.4" width="7.4" height="7.4" rx="1.7" fill="#1b72e6"/>
<rect x="933.9" y="354" width="3.6" height="4" rx=".8" fill="#eef4fe"/>
<rect x="934.4" y="356" width="2.6" height="1" fill="#1b72e6"/>
<rect x="1007.7" y="346.7" width="7.4" height="7.4" rx="1.7" fill="#1b72e6"/>
<rect x="1009.6" y="348.3" width="3.6" height="4" rx=".8" fill="#eef4fe"/>
<rect x="1010.1" y="350.3" width="2.6" height="1" fill="#1b72e6"/>
<rect x="1054.3" y="340.3" width="7.4" height="7.4" rx="1.7" fill="#1b72e6"/>
<rect x="1056.2" y="341.9" width="3.6" height="4" rx=".8" fill="#eef4fe"/>
<rect x="1056.7" y="343.9" width="2.6" height="1" fill="#1b72e6"/>
<rect x="1133.3" y="360.3" width="7.4" height="7.4" rx="1.7" fill="#1b72e6"/>
<rect x="1135.2" y="361.9" width="3.6" height="4" rx=".8" fill="#eef4fe"/>
<rect x="1135.7" y="363.9" width="2.6" height="1" fill="#1b72e6"/>
<rect x="1099.9" y="377.7" width="7.4" height="7.4" rx="1.7" fill="#1b72e6"/>
<rect x="1101.8" y="379.3" width="3.6" height="4" rx=".8" fill="#eef4fe"/>
<rect x="1102.3" y="381.3" width="2.6" height="1" fill="#1b72e6"/>
<rect x="964.2" y="394.6" width="7.4" height="7.4" rx="1.7" fill="#1b72e6"/>
<rect x="966.1" y="396.2" width="3.6" height="4" rx=".8" fill="#eef4fe"/>
<rect x="966.6" y="398.2" width="2.6" height="1" fill="#1b72e6"/>
<rect x="1153.3" y="397.7" width="7.4" height="7.4" rx="1.7" fill="#1b72e6"/>
<rect x="1155.2" y="399.3" width="3.6" height="4" rx=".8" fill="#eef4fe"/>
<rect x="1155.7" y="401.3" width="2.6" height="1" fill="#1b72e6"/>
<rect x="1272.7" y="416.3" width="7.4" height="7.4" rx="1.7" fill="#1b72e6"/>
<rect x="1274.6" y="417.9" width="3.6" height="4" rx=".8" fill="#eef4fe"/>
<rect x="1275.1" y="419.9" width="2.6" height="1" fill="#1b72e6"/>
<rect x="1294.3" y="420.7" width="7.4" height="7.4" rx="1.7" fill="#1b72e6"/>
<rect x="1296.2" y="422.3" width="3.6" height="4" rx=".8" fill="#eef4fe"/>
<rect x="1296.7" y="424.3" width="2.6" height="1" fill="#1b72e6"/>
<rect x="1156.7" y="433.5" width="7.4" height="7.4" rx="1.7" fill="#1b72e6"/>
<rect x="1158.6" y="435.1" width="3.6" height="4" rx=".8" fill="#eef4fe"/>
<rect x="1159.1" y="437.1" width="2.6" height="1" fill="#1b72e6"/>
<rect x="926.7" y="433.5" width="7.4" height="7.4" rx="1.7" fill="#1b72e6"/>
<rect x="928.6" y="435.1" width="3.6" height="4" rx=".8" fill="#eef4fe"/>
<rect x="929.1" y="437.1" width="2.6" height="1" fill="#1b72e6"/>
<rect x="1000.9" y="452.7" width="7.4" height="7.4" rx="1.7" fill="#1b72e6"/>
<rect x="1002.8" y="454.3" width="3.6" height="4" rx=".8" fill="#eef4fe"/>
<rect x="1003.3" y="456.3" width="2.6" height="1" fill="#1b72e6"/>
<rect x="1030.9" y="454.6" width="7.4" height="7.4" rx="1.7" fill="#1b72e6"/>
<rect x="1032.8" y="456.2" width="3.6" height="4" rx=".8" fill="#eef4fe"/>
<rect x="1033.3" y="458.2" width="2.6" height="1" fill="#1b72e6"/>
<rect x="1056.3" y="454.6" width="7.4" height="7.4" rx="1.7" fill="#1b72e6"/>
<rect x="1058.2" y="456.2" width="3.6" height="4" rx=".8" fill="#eef4fe"/>
<rect x="1058.7" y="458.2" width="2.6" height="1" fill="#1b72e6"/>
<rect x="1103.3" y="461.3" width="7.4" height="7.4" rx="1.7" fill="#1b72e6"/>
<rect x="1105.2" y="462.9" width="3.6" height="4" rx=".8" fill="#eef4fe"/>
<rect x="1105.7" y="464.9" width="2.6" height="1" fill="#1b72e6"/>
<rect x="1142.7" y="463.1" width="7.4" height="7.4" rx="1.7" fill="#1b72e6"/>
<rect x="1144.6" y="464.7" width="3.6" height="4" rx=".8" fill="#eef4fe"/>
<rect x="1145.1" y="466.7" width="2.6" height="1" fill="#1b72e6"/>
<rect x="1270.9" y="478.5" width="7.4" height="7.4" rx="1.7" fill="#1b72e6"/>
<rect x="1272.8" y="480.1" width="3.6" height="4" rx=".8" fill="#eef4fe"/>
<rect x="1273.3" y="482.1" width="2.6" height="1" fill="#1b72e6"/>
<rect x="1327.7" y="501" width="7.4" height="7.4" rx="1.7" fill="#1b72e6"/>
<rect x="1329.6" y="502.6" width="3.6" height="4" rx=".8" fill="#eef4fe"/>
<rect x="1330.1" y="504.6" width="2.6" height="1" fill="#1b72e6"/>
<rect x="1295.6" y="531.7" width="7.4" height="7.4" rx="1.7" fill="#1b72e6"/>
<rect x="1297.5" y="533.3" width="3.6" height="4" rx=".8" fill="#eef4fe"/>
<rect x="1298" y="535.3" width="2.6" height="1" fill="#1b72e6"/>
<rect x="1321.3" y="540.7" width="7.4" height="7.4" rx="1.7" fill="#1b72e6"/>
<rect x="1323.2" y="542.3" width="3.6" height="4" rx=".8" fill="#eef4fe"/>
<rect x="1323.7" y="544.3" width="2.6" height="1" fill="#1b72e6"/>
<rect x="299.3" y="338.2" width="7.4" height="7.4" rx="1.7" fill="#1b72e6"/>
<rect x="301.2" y="339.8" width="3.6" height="4" rx=".8" fill="#eef4fe"/>
<rect x="301.7" y="341.8" width="2.6" height="1" fill="#1b72e6"/>
<rect x="391.3" y="341.7" width="7.4" height="7.4" rx="1.7" fill="#1b72e6"/>
<text x="395" y="347.5" font-size="5.8" font-weight="bold" fill="#fff" text-anchor="middle">M</text>
<rect x="476.3" y="479.1" width="7.4" height="7.4" rx="1.7" fill="#1b72e6"/>
<text x="480" y="484.9" font-size="5.8" font-weight="bold" fill="#fff" text-anchor="middle">M</text>
<rect x="574.8" y="440.1" width="7.4" height="7.4" rx="1.7" fill="#1b72e6"/>
<text x="578.5" y="445.9" font-size="5.8" font-weight="bold" fill="#fff" text-anchor="middle">M</text>
<rect x="862.3" y="405.9" width="7.4" height="7.4" rx="1.7" fill="#1b72e6"/>
<text x="866" y="411.7" font-size="5.8" font-weight="bold" fill="#fff" text-anchor="middle">M</text>
<rect x="672.7" y="507" width="7.4" height="7.4" rx="1.7" fill="#1b72e6"/>
<text x="676.4" y="512.8" font-size="5.8" font-weight="bold" fill="#fff" text-anchor="middle">M</text>
<rect x="587.8" y="559.2" width="7.4" height="7.4" rx="1.7" fill="#1b72e6"/>
<text x="591.5" y="565" font-size="5.8" font-weight="bold" fill="#fff" text-anchor="middle">M</text>
<rect x="760.3" y="496.5" width="7.4" height="7.4" rx="1.7" fill="#1b72e6"/>
<text x="764" y="502.3" font-size="5.8" font-weight="bold" fill="#fff" text-anchor="middle">&#9650;</text>
<text x="455.5" y="451.6" font-size="6.95" font-weight="bold" fill="#686d73" text-anchor="middle" stroke="#fff" stroke-width="1.6" stroke-opacity=".85" paint-order="stroke" stroke-linejoin="round" textLength="41" lengthAdjust="spacing">ЯСАМАЛ</text>
<text x="455.5" y="459.7" font-size="6.95" font-weight="bold" fill="#686d73" text-anchor="middle" stroke="#fff" stroke-width="1.6" stroke-opacity=".85" paint-order="stroke" stroke-linejoin="round" textLength="42" lengthAdjust="spacing">YASAMAL</text>
<text x="602.5" y="414" font-size="6.95" font-weight="bold" fill="#686d73" text-anchor="middle" stroke="#fff" stroke-width="1.6" stroke-opacity=".85" paint-order="stroke" stroke-linejoin="round" textLength="40" lengthAdjust="spacing">КУБИНКА</text>
<text x="602" y="421.8" font-size="6.95" font-weight="bold" fill="#686d73" text-anchor="middle" stroke="#fff" stroke-width="1.6" stroke-opacity=".85" paint-order="stroke" stroke-linejoin="round" textLength="37" lengthAdjust="spacing">KUBINKA</text>
<text x="593.5" y="520.2" font-size="6.75" font-weight="bold" fill="#686d73" text-anchor="middle" stroke="#fff" stroke-width="1.6" stroke-opacity=".85" paint-order="stroke" stroke-linejoin="round" textLength="52.5" lengthAdjust="spacing">СОВЕТСКАЯ</text>
<text x="979" y="413" font-size="6.55" font-weight="bold" fill="#686d73" text-anchor="middle" stroke="#fff" stroke-width="1.6" stroke-opacity=".85" paint-order="stroke" stroke-linejoin="round" textLength="54.5" lengthAdjust="spacing">БАКУ БЕЛЫЙ</text>
<text x="979" y="420.7" font-size="6.55" font-weight="bold" fill="#686d73" text-anchor="middle" stroke="#fff" stroke-width="1.6" stroke-opacity=".85" paint-order="stroke" stroke-linejoin="round" textLength="29.5" lengthAdjust="spacing">ГОРОД</text>
<text x="979" y="428.6" font-size="6.6" fill="#6e7379" text-anchor="middle" stroke="#fff" stroke-width="1.6" stroke-opacity=".85" paint-order="stroke" stroke-linejoin="round" textLength="69" lengthAdjust="spacing">BAKI AĞ ŞƏHƏR</text>
<text x="1152.6" y="376.6" font-size="6.35" font-weight="bold" fill="#686d73" text-anchor="middle" stroke="#fff" stroke-width="1.6" stroke-opacity=".85" paint-order="stroke" stroke-linejoin="round" textLength="16" lengthAdjust="spacing">НЗС</text>
<text x="1152.6" y="384.5" font-size="6.35" font-weight="bold" fill="#686d73" text-anchor="middle" stroke="#fff" stroke-width="1.6" stroke-opacity=".85" paint-order="stroke" stroke-linejoin="round" textLength="16" lengthAdjust="spacing">NZS</text>
<text x="1224" y="418" font-size="6.35" font-weight="bold" fill="#686d73" text-anchor="middle" stroke="#fff" stroke-width="1.6" stroke-opacity=".85" paint-order="stroke" stroke-linejoin="round" textLength="62.5" lengthAdjust="spacing">HAZI ASLANOV</text>
<text x="1361.5" y="443.8" font-size="6.55" font-weight="bold" fill="#686d73" text-anchor="middle" stroke="#fff" stroke-width="1.6" stroke-opacity=".85" paint-order="stroke" stroke-linejoin="round" textLength="59" lengthAdjust="spacing">ХАТАИНСКИЙ</text>
<text x="1363" y="451.7" font-size="6.55" font-weight="bold" fill="#686d73" text-anchor="middle" stroke="#fff" stroke-width="1.6" stroke-opacity=".85" paint-order="stroke" stroke-linejoin="round" textLength="31.5" lengthAdjust="spacing">РАЙОН</text>
<text x="1363" y="460" font-size="6.6" fill="#6e7379" text-anchor="middle" stroke="#fff" stroke-width="1.6" stroke-opacity=".85" paint-order="stroke" stroke-linejoin="round" textLength="28" lengthAdjust="spacing">XƏTAİ</text>
<text x="1385.5" y="416" font-size="6.55" font-weight="bold" fill="#686d73" text-anchor="middle" stroke="#fff" stroke-width="1.6" stroke-opacity=".85" paint-order="stroke" stroke-linejoin="round" textLength="11" lengthAdjust="spacing">АХ</text>
<text x="1385.5" y="423.5" font-size="6.1" fill="#6e7379" text-anchor="middle" stroke="#fff" stroke-width="1.6" stroke-opacity=".85" paint-order="stroke" stroke-linejoin="round" textLength="9" lengthAdjust="spacing">ӘҺ</text>
<text x="424.5" y="347.2" font-size="6.3" fill="#1a73e8" text-anchor="middle" stroke="#fff" stroke-width="1.6" stroke-opacity=".85" paint-order="stroke" stroke-linejoin="round" textLength="49" lengthAdjust="spacingAndGlyphs">Иншаатчылар</text>
<text x="438" y="480.6" font-size="6.3" fill="#1a73e8" text-anchor="middle" stroke="#fff" stroke-width="1.6" stroke-opacity=".85" paint-order="stroke" stroke-linejoin="round" textLength="73.5" lengthAdjust="spacingAndGlyphs">Элмляр Академиясы</text>
<text x="436" y="488.2" font-size="6.3" fill="#1a73e8" text-anchor="middle" stroke="#fff" stroke-width="1.6" stroke-opacity=".85" paint-order="stroke" stroke-linejoin="round" textLength="78" lengthAdjust="spacingAndGlyphs">Bakı Dövlət Universiteti</text>
<text x="575.5" y="442" font-size="6.3" fill="#1a73e8" text-anchor="end" stroke="#fff" stroke-width="1.6" stroke-opacity=".85" paint-order="stroke" stroke-linejoin="round" textLength="28.5" lengthAdjust="spacingAndGlyphs">Низами</text>
<text x="575.5" y="449.7" font-size="6.3" fill="#1a73e8" text-anchor="end" stroke="#fff" stroke-width="1.6" stroke-opacity=".85" paint-order="stroke" stroke-linejoin="round" textLength="23" lengthAdjust="spacingAndGlyphs">Nizami</text>
<text x="706" y="428.2" font-size="6.3" fill="#1a73e8" text-anchor="middle" stroke="#fff" stroke-width="1.6" stroke-opacity=".85" paint-order="stroke" stroke-linejoin="round" textLength="16.5" lengthAdjust="spacingAndGlyphs">Баку</text>
<text x="706" y="435.4" font-size="6.3" fill="#1a73e8" text-anchor="middle" stroke="#fff" stroke-width="1.6" stroke-opacity=".85" paint-order="stroke" stroke-linejoin="round" textLength="14" lengthAdjust="spacingAndGlyphs">Bakı</text>
<text x="881.5" y="407.7" font-size="6.3" fill="#1a73e8" text-anchor="middle" stroke="#fff" stroke-width="1.6" stroke-opacity=".85" paint-order="stroke" stroke-linejoin="round" textLength="20" lengthAdjust="spacingAndGlyphs">Хатаи</text>
<text x="881" y="414.8" font-size="6.3" fill="#1a73e8" text-anchor="middle" stroke="#fff" stroke-width="1.6" stroke-opacity=".85" paint-order="stroke" stroke-linejoin="round" textLength="17.5" lengthAdjust="spacingAndGlyphs">Xətai</text>
<text x="728" y="494" font-size="6.3" fill="#1a73e8" text-anchor="middle" stroke="#fff" stroke-width="1.6" stroke-opacity=".85" paint-order="stroke" stroke-linejoin="round" textLength="60" lengthAdjust="spacingAndGlyphs">Marine Passanger</text>
<text x="744.5" y="501.5" font-size="6.3" fill="#1a73e8" text-anchor="middle" stroke="#fff" stroke-width="1.6" stroke-opacity=".85" paint-order="stroke" stroke-linejoin="round" textLength="27.5" lengthAdjust="spacingAndGlyphs">Terminal</text>
<text x="726.5" y="509.2" font-size="6.3" fill="#1a73e8" text-anchor="middle" stroke="#fff" stroke-width="1.6" stroke-opacity=".85" paint-order="stroke" stroke-linejoin="round" textLength="64" lengthAdjust="spacingAndGlyphs">Паромный причал</text>
<text x="661" y="509" font-size="6.3" fill="#1a73e8" text-anchor="middle" stroke="#fff" stroke-width="1.6" stroke-opacity=".85" paint-order="stroke" stroke-linejoin="round" textLength="19.5" lengthAdjust="spacingAndGlyphs">Сахил</text>
<text x="661" y="516.2" font-size="6.3" fill="#1a73e8" text-anchor="middle" stroke="#fff" stroke-width="1.6" stroke-opacity=".85" paint-order="stroke" stroke-linejoin="round" textLength="15.5" lengthAdjust="spacingAndGlyphs">Sahil</text>
<text x="606.5" y="561" font-size="6.3" fill="#1a73e8" text-anchor="middle" stroke="#fff" stroke-width="1.6" stroke-opacity=".85" paint-order="stroke" stroke-linejoin="round" textLength="18" lengthAdjust="spacingAndGlyphs">Ичери</text>
<text x="607" y="568.3" font-size="6.3" fill="#1a73e8" text-anchor="middle" stroke="#fff" stroke-width="1.6" stroke-opacity=".85" paint-order="stroke" stroke-linejoin="round" textLength="22" lengthAdjust="spacingAndGlyphs">İçərişə</text>
<text x="582" y="615.2" font-size="6.3" fill="#1a73e8" text-anchor="middle" stroke="#fff" stroke-width="1.6" stroke-opacity=".85" paint-order="stroke" stroke-linejoin="round" textLength="31" lengthAdjust="spacingAndGlyphs">Funicular</text>
<text x="1380.5" y="497" font-size="6.3" fill="#1a73e8" text-anchor="middle" stroke="#fff" stroke-width="1.6" stroke-opacity=".85" paint-order="stroke" stroke-linejoin="round" textLength="18" lengthAdjust="spacingAndGlyphs">Ази А</text>
<text x="1380.5" y="504.5" font-size="6.3" fill="#1a73e8" text-anchor="middle" stroke="#fff" stroke-width="1.6" stroke-opacity=".85" paint-order="stroke" stroke-linejoin="round" textLength="17" lengthAdjust="spacingAndGlyphs">Həzi .</text>
<text x="598.5" y="457.5" font-size="4.6" fill="#7d8288" transform="rotate(-20.3664 598.5 456)" textLength="45.974" lengthAdjust="spacingAndGlyphs" stroke="#fff" stroke-width="1.200" stroke-opacity=".7" paint-order="stroke">Shamil Azizbeyov</text>
<text x="636" y="463.3" font-size="4.6" fill="#7d8288" transform="rotate(-20.647 636 461.8)" textLength="22.1208" lengthAdjust="spacingAndGlyphs" stroke="#fff" stroke-width="1.200" stroke-opacity=".7" paint-order="stroke">Fuzuli St</text>
<text x="583.9" y="371.5" font-size="4.6" fill="#7d8288" transform="rotate(-18.3056 583.9 370)" textLength="42.0268" lengthAdjust="spacingAndGlyphs" stroke="#fff" stroke-width="1.200" stroke-opacity=".7" paint-order="stroke">ул. Бакиханова</text>
<text x="636" y="400.5" font-size="4.6" fill="#7d8288" transform="rotate(72.8294 636 399)" textLength="37.2607" lengthAdjust="spacingAndGlyphs" stroke="#fff" stroke-width="1.200" stroke-opacity=".7" paint-order="stroke">Samad Vurgun</text>
<text x="665" y="406.1" font-size="4.6" fill="#7d8288" transform="rotate(70.9065 665 404.6)" textLength="60.53" lengthAdjust="spacingAndGlyphs" stroke="#fff" stroke-width="1.200" stroke-opacity=".7" paint-order="stroke">ул. Рашида Бейбутова</text>
<text x="670.7" y="366.5" font-size="4.6" fill="#7d8288" transform="rotate(69.6769 670.7 365)" textLength="43.1885" lengthAdjust="spacingAndGlyphs" stroke="#fff" stroke-width="1.200" stroke-opacity=".7" paint-order="stroke">Ахадлыг Авеню</text>
<text x="735.5" y="403.5" font-size="4.6" fill="#7d8288" transform="rotate(-47.7263 735.5 402)" textLength="44.5982" lengthAdjust="spacingAndGlyphs" stroke="#fff" stroke-width="1.200" stroke-opacity=".7" paint-order="stroke">Хатаи проспект</text>
<text x="834.5" y="361.5" font-size="4.6" fill="#7d8288" transform="rotate(-6.00901 834.5 360)" textLength="28.6575" lengthAdjust="spacingAndGlyphs" stroke="#fff" stroke-width="1.200" stroke-opacity=".7" paint-order="stroke">пр. Бабека</text>
<text x="806" y="387" font-size="4.6" fill="#7d8288" transform="rotate(79.2869 806 385.5)" textLength="56.4845" lengthAdjust="spacingAndGlyphs" stroke="#fff" stroke-width="1.200" stroke-opacity=".7" paint-order="stroke">ул. Юсифа Сафарова</text>
<text x="891.5" y="366" font-size="4.6" fill="#7d8288" transform="rotate(78.4078 891.5 364.5)" textLength="59.7181" lengthAdjust="spacingAndGlyphs" stroke="#fff" stroke-width="1.200" stroke-opacity=".7" paint-order="stroke">Nəcəfqulu Rəfiyev Küçəsi</text>
<text x="824" y="457.5" font-size="4.6" fill="#7d8288" transform="rotate(-8.42697 824 456)" textLength="40.942" lengthAdjust="spacingAndGlyphs" stroke="#fff" stroke-width="1.200" stroke-opacity=".7" paint-order="stroke">ул. Ю. Гагарина</text>
<text x="845" y="463.5" font-size="4.6" fill="#7d8288" transform="rotate(-5.48359 845 462)" textLength="37.6724" lengthAdjust="spacingAndGlyphs" stroke="#fff" stroke-width="1.200" stroke-opacity=".7" paint-order="stroke">пр-т 8 Ноября</text>
<text x="720.5" y="480" font-size="4.6" fill="#7d8288" transform="rotate(-19.44 720.5 478.5)" textLength="27.0416" lengthAdjust="spacingAndGlyphs" stroke="#fff" stroke-width="1.200" stroke-opacity=".7" paint-order="stroke">ул. Хагани</text>
<text x="552.5" y="492" font-size="4.6" fill="#7d8288" transform="rotate(-14.0362 552.5 490.5)" textLength="49.4773" lengthAdjust="spacingAndGlyphs" stroke="#fff" stroke-width="1.200" stroke-opacity=".7" paint-order="stroke">Mirzagha Aliyev Rd</text>
<text x="565" y="485.5" font-size="4.6" fill="#7d8288" transform="rotate(-14.5742 565 484)" textLength="25.8312" lengthAdjust="spacingAndGlyphs" stroke="#fff" stroke-width="1.200" stroke-opacity=".7" paint-order="stroke">Fuzuli St</text>
<text x="617" y="477" font-size="4.6" fill="#7d8288" transform="rotate(-14.9314 617 475.5)" textLength="69.8588" lengthAdjust="spacingAndGlyphs" stroke="#fff" stroke-width="1.200" stroke-opacity=".7" paint-order="stroke">Samsi Badalbeyli Küçəsi</text>
<text x="660.5" y="538.5" font-size="4.6" fill="#7d8288" transform="rotate(-24.3045 660.5 537)" textLength="51.0221" lengthAdjust="spacingAndGlyphs" stroke="#fff" stroke-width="1.200" stroke-opacity=".7" paint-order="stroke">просп. Нефтяников</text>
<text x="557" y="582" font-size="4.6" fill="#7d8288" transform="rotate(-65.556 557 580.5)" textLength="36.2491" lengthAdjust="spacingAndGlyphs" stroke="#fff" stroke-width="1.200" stroke-opacity=".7" paint-order="stroke">Мехти Гусейн</text>
<text x="509" y="585" font-size="4.6" fill="#7d8288" transform="rotate(41.6335 509 583.5)" textLength="54.1872" lengthAdjust="spacingAndGlyphs" stroke="#fff" stroke-width="1.200" stroke-opacity=".7" paint-order="stroke">просп. Парламента</text>
<text x="955" y="377.5" font-size="4.6" fill="#7d8288" transform="rotate(-33.6901 955 376)" textLength="47.5933" lengthAdjust="spacingAndGlyphs" stroke="#fff" stroke-width="1.200" stroke-opacity=".7" paint-order="stroke">Suleyman Vazirov</text>
<text x="943" y="358.3" font-size="4.6" fill="#7d8288" transform="rotate(-24.5672 943 356.8)" textLength="30.787" lengthAdjust="spacingAndGlyphs" stroke="#fff" stroke-width="1.200" stroke-opacity=".7" paint-order="stroke">пр. Бабека</text>
<text x="1239" y="499.5" font-size="4.6" fill="#7d8288" transform="rotate(33.9174 1239 498)" textLength="34.9464" lengthAdjust="spacingAndGlyphs" stroke="#fff" stroke-width="1.200" stroke-opacity=".7" paint-order="stroke">пр-т 8 Ноября</text>
<text x="1357" y="572.2" font-size="4.6" fill="#7d8288" transform="rotate(59.4606 1357 570.7)" textLength="39.36" lengthAdjust="spacingAndGlyphs" stroke="#fff" stroke-width="1.200" stroke-opacity=".7" paint-order="stroke">пр-т 8 Ноября</text>
<text x="199" y="372" font-size="4.6" fill="#7d8288" transform="rotate(74.2488 199 370.5)" textLength="60.7824" lengthAdjust="spacingAndGlyphs" stroke="#fff" stroke-width="1.200" stroke-opacity=".7" paint-order="stroke">Бакинская Окружная Дорога</text>
<text x="263.5" y="604.5" font-size="4.6" fill="#7d8288" transform="rotate(98.7462 263.5 603)" textLength="78.9177" lengthAdjust="spacingAndGlyphs" stroke="#fff" stroke-width="1.200" stroke-opacity=".7" paint-order="stroke">Бакинская Окружная Дорога</text>
<text x="283" y="381" font-size="4.6" fill="#7d8288" transform="rotate(73.1416 283 379.5)" textLength="51.7228" lengthAdjust="spacingAndGlyphs" stroke="#fff" stroke-width="1.200" stroke-opacity=".7" paint-order="stroke">Шелковый путь</text>
<text x="310" y="478.5" font-size="4.6" fill="#7d8288" transform="rotate(74.4072 310 477)" textLength="44.643" lengthAdjust="spacingAndGlyphs" stroke="#fff" stroke-width="1.200" stroke-opacity=".7" paint-order="stroke">Шелковый путь</text>
<text x="322" y="511.5" font-size="4.6" fill="#7d8288" transform="rotate(68.6294 322 510)" textLength="24.6982" lengthAdjust="spacingAndGlyphs" stroke="#fff" stroke-width="1.200" stroke-opacity=".7" paint-order="stroke">путь</text>
<text x="349" y="627" font-size="4.6" fill="#7d8288" transform="rotate(85.6013 349 625.5)" textLength="58.6728" lengthAdjust="spacingAndGlyphs" stroke="#fff" stroke-width="1.200" stroke-opacity=".7" paint-order="stroke">Сити Байпасс М-3</text>
<text x="356.5" y="630" font-size="4.6" fill="#7d8288" transform="rotate(68.9625 356.5 628.5)" textLength="41.7852" lengthAdjust="spacingAndGlyphs" stroke="#fff" stroke-width="1.200" stroke-opacity=".7" paint-order="stroke">Шелковый путь</text>
<text x="449.5" y="562.5" font-size="4.6" fill="#7d8288" transform="rotate(48.0128 449.5 561)" textLength="40.3609" lengthAdjust="spacingAndGlyphs" stroke="#fff" stroke-width="1.200" stroke-opacity=".7" paint-order="stroke">Matbuat avenue</text>
<text x="443.5" y="495" font-size="4.6" fill="#7d8288" transform="rotate(86.7603 443.5 493.5)" textLength="26.5424" lengthAdjust="spacingAndGlyphs" stroke="#fff" stroke-width="1.200" stroke-opacity=".7" paint-order="stroke">Matbuat</text>
<text x="479.5" y="604.5" font-size="4.6" fill="#7d8288" transform="rotate(126.87 479.5 603)" textLength="45" lengthAdjust="spacingAndGlyphs" stroke="#fff" stroke-width="1.200" stroke-opacity=".7" paint-order="stroke">Бадамдарское ш.</text>
<text x="536.5" y="436.5" font-size="4.6" fill="#7d8288" transform="rotate(84.144 536.5 435)" textLength="58.8069" lengthAdjust="spacingAndGlyphs" stroke="#fff" stroke-width="1.200" stroke-opacity=".7" paint-order="stroke">Nariman Narimanov Ave</text>
<text x="533.5" y="411" font-size="4.6" fill="#7d8288" transform="rotate(108.97 533.5 409.5)" textLength="50.7568" lengthAdjust="spacingAndGlyphs" stroke="#fff" stroke-width="1.200" stroke-opacity=".7" paint-order="stroke">просп. Строителей</text>
<text x="532" y="343.5" font-size="4.6" fill="#7d8288" transform="rotate(77.1957 532 342)" textLength="33.8415" lengthAdjust="spacingAndGlyphs" stroke="#fff" stroke-width="1.200" stroke-opacity=".7" paint-order="stroke">Izmir küçəsi</text>
<text x="1376" y="641.5" font-size="4.6" fill="#7d8288" transform="rotate(70.3462 1376 640)" textLength="29.7321" lengthAdjust="spacingAndGlyphs" stroke="#fff" stroke-width="1.200" stroke-opacity=".7" paint-order="stroke">пр-т 8 Н</text>
<circle cx="552.5" cy="371.7" r="44" fill="#e8e86a" fill-opacity="0.1"/>
<circle cx="552.5" cy="371.7" r="22" fill="#e0e050" fill-opacity="0.24"/>
<circle cx="840" cy="379" r="44" fill="#e8e86a" fill-opacity="0.1"/>
<circle cx="840" cy="379" r="22" fill="#e0e050" fill-opacity="0.24"/>
<circle cx="653.7" cy="545.6" r="44" fill="#e8e86a" fill-opacity="0.11"/>
<circle cx="653.7" cy="545.6" r="21" fill="#e0e050" fill-opacity="0.2"/>
<circle cx="624" cy="607.2" r="43" fill="#a8e070" fill-opacity="0.17"/>
<circle cx="624" cy="607.2" r="21" fill="#86e040" fill-opacity="0.36"/>
<circle cx="632.5" cy="556" r="21" fill="#8c8878" fill-opacity="0.13"/>
<circle cx="639.7" cy="514.4" r="23" fill="#c8bc70" fill-opacity="0.16"/>
<circle cx="640.5" cy="515.9" r="11.8" fill="#000" fill-opacity=".18"/>
<circle cx="639.9" cy="514.9" r="10.85" fill="#fff" stroke="#8a8a8a" stroke-width="1.1"/>
<path d="M636.200 509.500v11.200" stroke="#707070" stroke-width=".9" fill="none"/><path d="M637.600 510h8.700l-1.500 2.600 1.500 2.600h-8.700z" fill="#8c8c8c"/><path d="M638.600 510.500h1.400v1.900h-1.400zM641.400 510.500h1.400v1.900h-1.400zM640 512.800h1.400v1.900h-1.400zM642.800 512.800h1.200v1.900h-1.200z" fill="#5e5e5e"/>
<circle cx="553.1" cy="372.7" r="11.6" fill="#000" fill-opacity=".18"/>
<circle cx="552.5" cy="371.7" r="10.3" fill="#fff" stroke="#e8e216" stroke-width="1.8"/>
<text x="552.5" y="374.652" font-size="8.2" fill="#3a3a3a" stroke="#3a3a3a" stroke-width=".28" text-anchor="middle">4</text>
<circle cx="840.6" cy="380" r="11.6" fill="#000" fill-opacity=".18"/>
<circle cx="840" cy="379" r="10.3" fill="#fff" stroke="#e8e216" stroke-width="1.8"/>
<text x="840" y="381.952" font-size="8.2" fill="#3a3a3a" stroke="#3a3a3a" stroke-width=".28" text-anchor="middle">5</text>
<circle cx="633.2" cy="556.7" r="14.9" fill="#000" fill-opacity=".18"/>
<circle cx="632.6" cy="555.7" r="13.95" fill="#fff" stroke="#9a9a9a" stroke-width="1.1"/>
<text x="632.6" y="558.652" font-size="8.2" fill="#3a3a3a" stroke="#3a3a3a" stroke-width=".28" text-anchor="middle">1</text>
<circle cx="654.3" cy="546.6" r="11.6" fill="#000" fill-opacity=".18"/>
<circle cx="653.7" cy="545.6" r="10.3" fill="#fff" stroke="#e8e216" stroke-width="1.8"/>
<text x="653.7" y="548.552" font-size="8.2" fill="#3a3a3a" stroke="#3a3a3a" stroke-width=".28" text-anchor="middle">3</text>
<circle cx="624.6" cy="608.2" r="11.6" fill="#000" fill-opacity=".18"/>
<circle cx="624" cy="607.2" r="10.3" fill="#fff" stroke="#5fdc1c" stroke-width="1.8"/>
<text x="624" y="610.152" font-size="8.2" fill="#3a3a3a" stroke="#3a3a3a" stroke-width=".28" text-anchor="middle">2</text>
<g><rect x="171.900" y="347.300" width="109.200" height="22.500" rx="1" fill="#000" fill-opacity=".10"/><rect x="171.400" y="346.500" width="109.200" height="22.500" rx="1" fill="#fff"/><rect x="219.200" y="346.500" width=".7" height="22.500" fill="#e6e6e6"/>
<text x="195.800" y="361.300" font-size="9.600" font-weight="bold" fill="#222" text-anchor="middle" textLength="28.400" lengthAdjust="spacingAndGlyphs">Карта</text><text x="250.500" y="361.300" font-size="9.600" fill="#565656" text-anchor="middle" textLength="40" lengthAdjust="spacingAndGlyphs">Спутник</text></g>
</svg>
<!--MAPEND-->
</div>
</body>
</html>
